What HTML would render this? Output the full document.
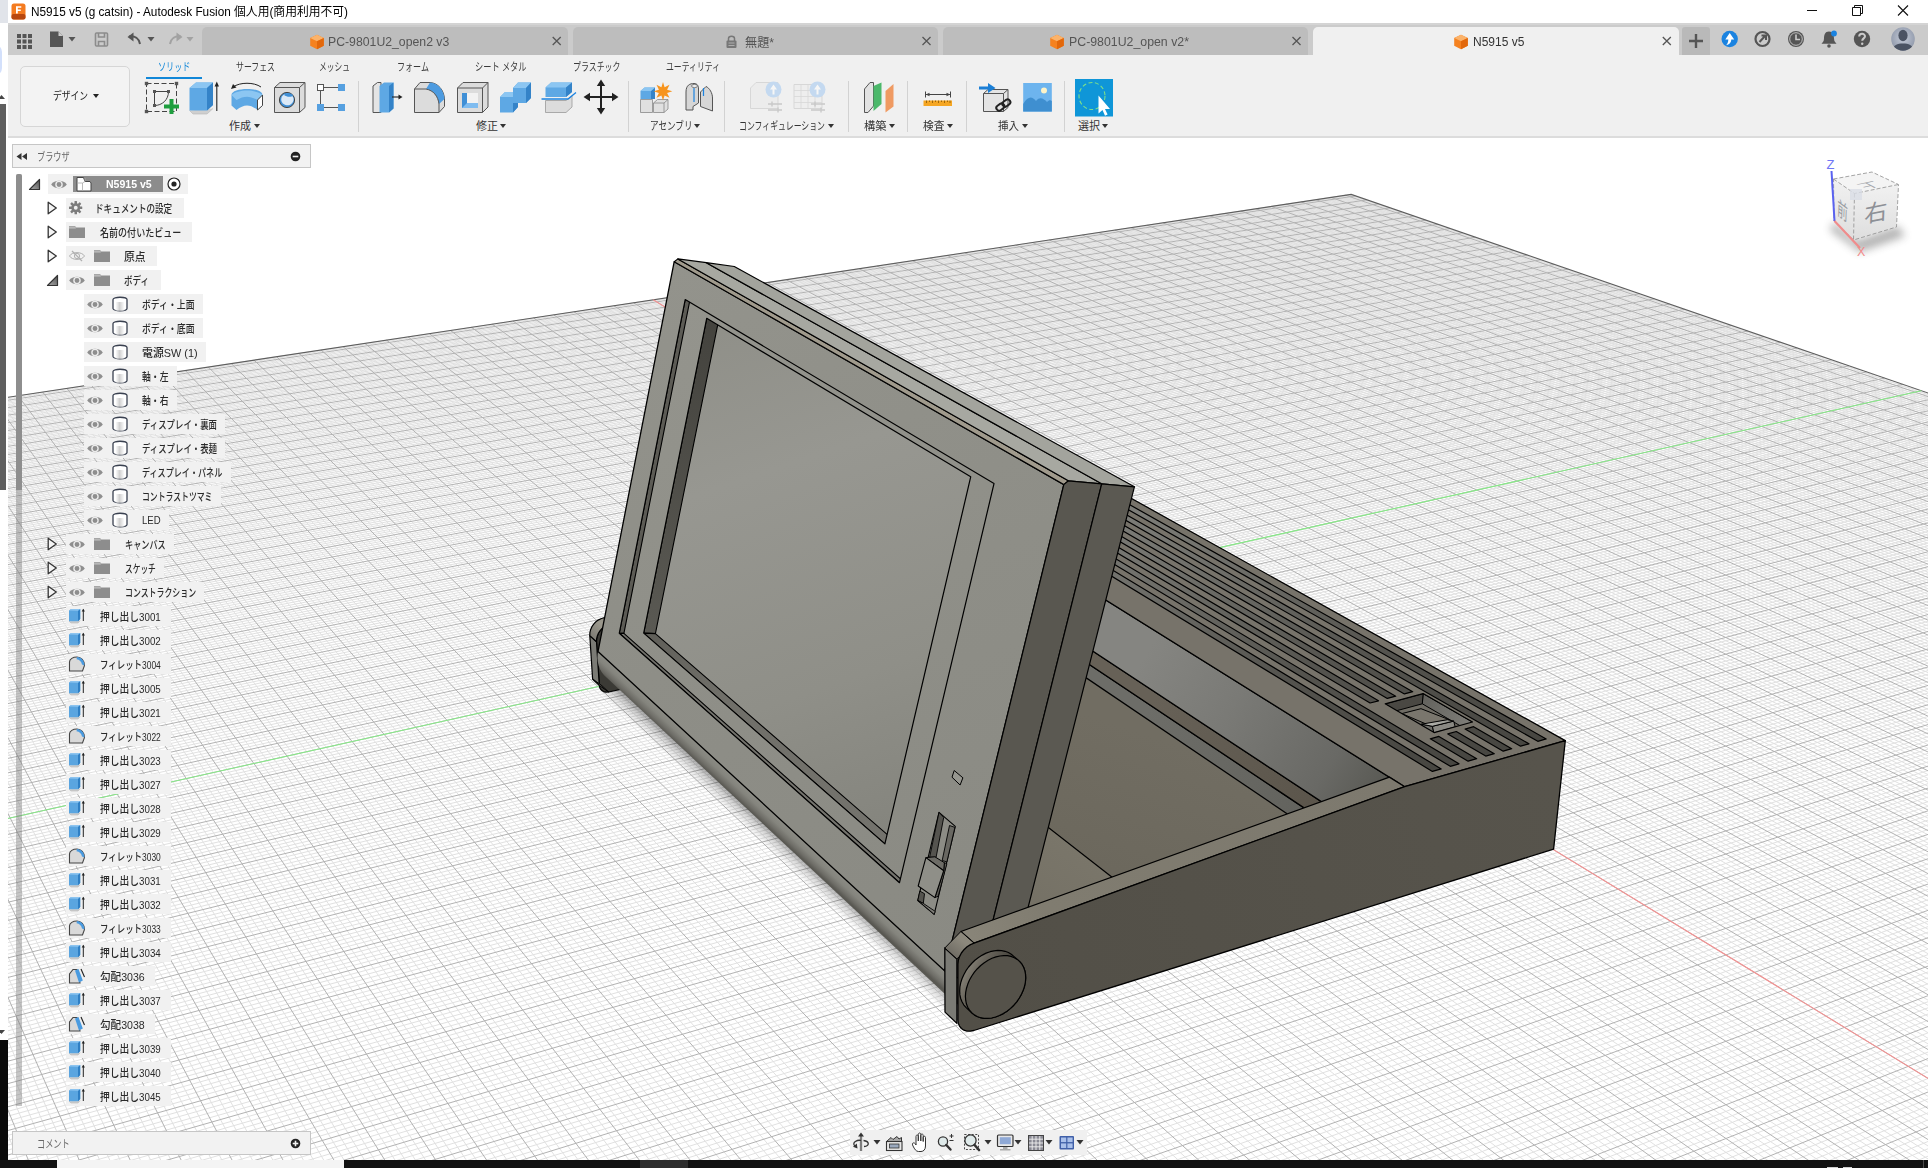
<!DOCTYPE html>
<html lang="ja"><head><meta charset="utf-8"><title>N5915 v5 - Autodesk Fusion</title>
<style>
html,body{margin:0;padding:0;background:#fff}
#app{position:relative;width:1928px;height:1168px;overflow:hidden;background:#fff;font-family:'Liberation Sans','Noto Sans CJK JP',sans-serif;}
.abs{position:absolute}
.t{position:absolute;white-space:nowrap;transform-origin:0 50%;line-height:normal}
.ic{position:absolute;overflow:visible}
.rb{position:absolute;height:20px;background:#f1f1f1}
.tab{position:absolute;top:27px;height:28px;width:365.7px;background:#bdbdbd;border-radius:5px 5px 0 0}
.sep{position:absolute;top:81px;width:1px;height:51px;background:#d2d2d2}
.arr{position:absolute;width:0;height:0;border-left:3.5px solid transparent;border-right:3.5px solid transparent;border-top:4.5px solid #333}
</style></head><body><div id="app">

<svg class="abs" style="left:0;top:0" width="1928" height="1168" viewBox="0 0 1928 1168"><defs><linearGradient id="g1" gradientUnits="userSpaceOnUse" x1="1058.6" y1="705.4" x2="971.1" y2="969.4"><stop offset="0" stop-color="#716d62"/><stop offset="1" stop-color="#676358"/></linearGradient><linearGradient id="g2" gradientUnits="userSpaceOnUse" x1="1001.1" y1="790.6" x2="894" y2="944.9"><stop offset="0" stop-color="#7a766a"/><stop offset="1" stop-color="#6e6a5f"/></linearGradient><linearGradient id="g3" gradientUnits="userSpaceOnUse" x1="1144.8" y1="710.8" x2="1364.1" y2="858.3"><stop offset="0" stop-color="#6d6d68"/><stop offset="0.7" stop-color="#63635e"/><stop offset="1" stop-color="#55554f"/></linearGradient><linearGradient id="g4" gradientUnits="userSpaceOnUse" x1="1153.4" y1="699.6" x2="1373.8" y2="845.8"><stop offset="0" stop-color="#676157"/><stop offset="1" stop-color="#575147"/></linearGradient><linearGradient id="g5" gradientUnits="userSpaceOnUse" x1="1145.4" y1="655.1" x2="1386.4" y2="809.7"><stop offset="0" stop-color="#858581"/><stop offset="0.35" stop-color="#7a7a76"/><stop offset="0.75" stop-color="#696965"/><stop offset="1" stop-color="#55554f"/></linearGradient><linearGradient id="g6" gradientUnits="userSpaceOnUse" x1="1101.9" y1="489.1" x2="1546.2" y2="738.9"><stop offset="0" stop-color="#82827d"/><stop offset="0.3" stop-color="#6e6e69"/><stop offset="0.65" stop-color="#54534e"/><stop offset="1" stop-color="#474641"/></linearGradient><linearGradient id="g7" gradientUnits="userSpaceOnUse" x1="1086.8" y1="492.2" x2="1529" y2="743.8"><stop offset="0" stop-color="#82827d"/><stop offset="0.3" stop-color="#6e6e69"/><stop offset="0.65" stop-color="#54534e"/><stop offset="1" stop-color="#474641"/></linearGradient><linearGradient id="g8" gradientUnits="userSpaceOnUse" x1="1071.7" y1="495.3" x2="1511.7" y2="748.7"><stop offset="0" stop-color="#82827d"/><stop offset="0.3" stop-color="#6e6e69"/><stop offset="0.65" stop-color="#54534e"/><stop offset="1" stop-color="#474641"/></linearGradient><linearGradient id="g9" gradientUnits="userSpaceOnUse" x1="1071.7" y1="495.3" x2="1511.7" y2="748.7"><stop offset="0" stop-color="#82827d"/><stop offset="0.3" stop-color="#6e6e69"/><stop offset="0.65" stop-color="#54534e"/><stop offset="1" stop-color="#474641"/></linearGradient><linearGradient id="g10" gradientUnits="userSpaceOnUse" x1="1056.4" y1="498.5" x2="1494.3" y2="753.7"><stop offset="0" stop-color="#82827d"/><stop offset="0.3" stop-color="#6e6e69"/><stop offset="0.65" stop-color="#54534e"/><stop offset="1" stop-color="#474641"/></linearGradient><linearGradient id="g11" gradientUnits="userSpaceOnUse" x1="1056.4" y1="498.5" x2="1494.3" y2="753.7"><stop offset="0" stop-color="#82827d"/><stop offset="0.3" stop-color="#6e6e69"/><stop offset="0.65" stop-color="#54534e"/><stop offset="1" stop-color="#474641"/></linearGradient><linearGradient id="g12" gradientUnits="userSpaceOnUse" x1="1041" y1="501.6" x2="1476.7" y2="758.7"><stop offset="0" stop-color="#82827d"/><stop offset="0.3" stop-color="#6e6e69"/><stop offset="0.65" stop-color="#54534e"/><stop offset="1" stop-color="#474641"/></linearGradient><linearGradient id="g13" gradientUnits="userSpaceOnUse" x1="1041" y1="501.6" x2="1476.7" y2="758.7"><stop offset="0" stop-color="#82827d"/><stop offset="0.3" stop-color="#6e6e69"/><stop offset="0.65" stop-color="#54534e"/><stop offset="1" stop-color="#474641"/></linearGradient><linearGradient id="g14" gradientUnits="userSpaceOnUse" x1="1025.5" y1="504.8" x2="1459" y2="763.8"><stop offset="0" stop-color="#82827d"/><stop offset="0.3" stop-color="#6e6e69"/><stop offset="0.65" stop-color="#54534e"/><stop offset="1" stop-color="#474641"/></linearGradient><linearGradient id="g15" gradientUnits="userSpaceOnUse" x1="1010" y1="508" x2="1441.2" y2="768.9"><stop offset="0" stop-color="#82827d"/><stop offset="0.3" stop-color="#6e6e69"/><stop offset="0.65" stop-color="#54534e"/><stop offset="1" stop-color="#474641"/></linearGradient><clipPath id="c16"><polygon points="1423.1,693.6 1472.5,722 1434.1,732.6 1385.2,703.8"/></clipPath><linearGradient id="g17" gradientUnits="userSpaceOnUse" x1="1423.1" y1="693.6" x2="1472.5" y2="722"><stop offset="0" stop-color="#62615c"/><stop offset="1" stop-color="#7f7e79"/></linearGradient><linearGradient id="g18" gradientUnits="userSpaceOnUse" x1="1424.1" y1="723.7" x2="1452.6" y2="721.1"><stop offset="0" stop-color="#b6b6b0"/><stop offset="0.5" stop-color="#a6a6a0"/><stop offset="1" stop-color="#8e8e88"/></linearGradient><linearGradient id="g19" gradientUnits="userSpaceOnUse" x1="589.8" y1="635.6" x2="612.5" y2="613"><stop offset="0" stop-color="#7d7b73"/><stop offset="0.5" stop-color="#9c998e"/><stop offset="1" stop-color="#8a877d"/></linearGradient><linearGradient id="g20" gradientUnits="userSpaceOnUse" x1="705.1" y1="750.2" x2="695.5" y2="760.6"><stop offset="0" stop-color="#8c8c85"/><stop offset="0.4" stop-color="#84847d"/><stop offset="0.75" stop-color="#6f6e68"/><stop offset="1" stop-color="#595852"/></linearGradient><linearGradient id="g21" gradientUnits="userSpaceOnUse" x1="611" y1="681.3" x2="599.5" y2="693.8"><stop offset="0" stop-color="rgba(0,0,0,0.36)"/><stop offset="0.45" stop-color="rgba(0,0,0,0.15)"/><stop offset="1" stop-color="rgba(0,0,0,0)"/></linearGradient><linearGradient id="g22" gradientUnits="userSpaceOnUse" x1="674.2" y1="261.7" x2="944.8" y2="970.9"><stop offset="0" stop-color="#93938c"/><stop offset="0.5" stop-color="#8e8e87"/><stop offset="1" stop-color="#8a8a83"/></linearGradient><linearGradient id="g23" gradientUnits="userSpaceOnUse" x1="685.2" y1="299.6" x2="899.5" y2="882.7"><stop offset="0" stop-color="#94948d"/><stop offset="1" stop-color="#8b8b84"/></linearGradient><clipPath id="c24"><polygon points="619.3,633.2 899.5,882.7 994,483.6 685.2,299.6"/></clipPath><linearGradient id="g25" gradientUnits="userSpaceOnUse" x1="702" y1="317.7" x2="879.7" y2="843.9"><stop offset="0" stop-color="#8f8f88"/><stop offset="0.3" stop-color="#979791"/><stop offset="0.7" stop-color="#8f8f88"/><stop offset="1" stop-color="#84847d"/></linearGradient><clipPath id="c26"><polygon points="643.7,633.1 884.9,843.9 970.7,476.8 706.7,318.3"/></clipPath><linearGradient id="g27" gradientUnits="userSpaceOnUse" x1="706.7" y1="318.3" x2="643.7" y2="633.1"><stop offset="0" stop-color="#44433e"/><stop offset="1" stop-color="#5a5953"/></linearGradient><linearGradient id="g28" gradientUnits="userSpaceOnUse" x1="643.7" y1="633.1" x2="884.9" y2="843.9"><stop offset="0" stop-color="#5f5e58"/><stop offset="0.3" stop-color="#706f69"/><stop offset="1" stop-color="#74736d"/></linearGradient><linearGradient id="g29" gradientUnits="userSpaceOnUse" x1="1404.7" y1="786.7" x2="957.9" y2="949"><stop offset="0" stop-color="#7d796e"/><stop offset="0.8" stop-color="#807c70"/><stop offset="1" stop-color="#8a867a"/></linearGradient><linearGradient id="g30" gradientUnits="userSpaceOnUse" x1="957.9" y1="959.8" x2="968.7" y2="945.9"><stop offset="0" stop-color="#6f6c64"/><stop offset="1" stop-color="#8c887c"/></linearGradient><linearGradient id="g31" gradientUnits="userSpaceOnUse" x1="957.9" y1="1000.4" x2="1558.7" y2="801.8"><stop offset="0" stop-color="#524f47"/><stop offset="1" stop-color="#57544c"/></linearGradient><linearGradient id="g32" gradientUnits="userSpaceOnUse" x1="959.7" y1="960.7" x2="997" y2="979.7"><stop offset="0" stop-color="#9a968a"/><stop offset="0.5" stop-color="#6a665d"/><stop offset="1" stop-color="#4a4740"/></linearGradient></defs><path d="M-50.2 406.2L1351.2 194.4M-49.4 407.5L1353.4 195.1M-47.6 410.2L1358 196.7M-46.7 411.5L1360.2 197.5M-45.8 412.9L1362.5 198.3M-44.9 414.2L1364.8 199.1M-43.1 416.9L1369.3 200.6M-42.2 418.3L1371.6 201.4M-41.3 419.7L1373.9 202.2M-40.4 421.1L1376.3 203M-77 429.8L1380.9 204.6M-76.2 431.2L1383.2 205.4M-75.3 432.6L1385.5 206.2M-74.4 434L1387.9 207M-72.7 436.8L1392.5 208.6M-71.8 438.3L1394.9 209.4M-70.9 439.7L1397.2 210.2M-70 441.1L1399.6 211M-68.3 444L1404.3 212.7M-67.4 445.5L1406.7 213.5M-66.5 446.9L1409.1 214.3M-65.6 448.4L1411.5 215.1M-63.8 451.3L1416.3 216.8M-62.9 452.8L1418.7 217.6M-62 454.2L1421.1 218.4M-61.1 455.7L1423.5 219.3M-59.2 458.7L1428.3 220.9M-58.3 460.2L1430.8 221.8M-57.4 461.7L1433.2 222.6M-56.5 463.2L1435.6 223.5M-54.6 466.2L1440.5 225.1M-53.7 467.7L1443 226M-52.7 469.3L1445.5 226.8M-51.8 470.8L1447.9 227.7M-49.9 473.9L1452.9 229.4M-48.9 475.4L1455.4 230.3M-48 477L1457.9 231.1M-47 478.5L1460.4 232M-45.1 481.6L1465.4 233.7M-44.2 483.2L1467.9 234.6M-43.2 484.8L1470.5 235.4M-42.2 486.3L1473 236.3M-40.3 489.5L1478.1 238.1M-80.6 498L1480.6 238.9M-79.7 499.6L1483.2 239.8M-78.8 501.2L1485.7 240.7M-76.9 504.5L1490.9 242.5M-76 506.1L1493.5 243.4M-75 507.8L1496 244.3M-74.1 509.4L1498.6 245.1M-72.2 512.7L1503.8 246.9M-71.3 514.4L1506.5 247.8M-70.3 516.1L1509.1 248.7M-69.3 517.8L1511.7 249.6M-67.4 521.1L1517 251.5M-66.4 522.8L1519.6 252.4M-65.5 524.5L1522.3 253.3M-64.5 526.3L1524.9 254.2M-62.5 529.7L1530.3 256M-61.6 531.4L1532.9 257M-60.6 533.2L1535.6 257.9M-59.6 534.9L1538.3 258.8M-57.6 538.4L1543.7 260.7M-56.6 540.1L1546.4 261.6M-55.6 541.9L1549.1 262.5M-54.6 543.7L1551.8 263.5M-52.6 547.2L1557.3 265.4M-51.5 549L1560.1 266.3M-50.5 550.8L1562.8 267.2M-49.5 552.6L1565.6 268.2M-47.4 556.2L1571.1 270.1M-46.4 558L1573.9 271.1M-45.4 559.9L1576.7 272M-44.3 561.7L1579.5 273M-42.2 565.4L1585.1 274.9M-41.2 567.2L1587.9 275.9M-40.1 569.1L1590.7 276.8M-83.8 579L1593.5 277.8M-81.8 582.8L1599.2 279.8M-80.8 584.7L1602 280.8M-79.8 586.6L1604.9 281.7M-78.8 588.5L1607.8 282.7M-76.8 592.4L1613.5 284.7M-75.7 594.3L1616.4 285.7M-74.7 596.3L1619.3 286.7M-73.7 598.2L1622.2 287.7M-71.6 602.2L1628 289.7M-70.6 604.2L1630.9 290.7M-69.5 606.1L1633.9 291.7M-68.5 608.1L1636.8 292.7M-66.4 612.1L1642.7 294.8M-65.3 614.2L1645.7 295.8M-64.3 616.2L1648.6 296.8M-63.2 618.2L1651.6 297.8M-61.1 622.3L1657.6 299.9M-60 624.4L1660.6 300.9M-58.9 626.4L1663.6 301.9M-57.8 628.5L1666.6 303M-55.7 632.6L1672.7 305.1M-54.6 634.7L1675.7 306.1M-53.5 636.8L1678.7 307.2M-52.4 638.9L1681.8 308.2M-50.2 643.2L1687.9 310.3M-49 645.3L1691 311.4M-47.9 647.5L1694.1 312.5M-46.8 649.6L1697.2 313.5M-44.5 653.9L1703.4 315.7M-43.4 656.1L1706.5 316.7M-42.3 658.3L1709.7 317.8M-41.1 660.5L1712.8 318.9M-87.5 674.4L1719.1 321.1M-86.4 676.6L1722.3 322.1M-85.3 678.9L1725.4 323.2M-84.3 681.2L1728.6 324.3M-82.1 685.7L1735 326.5M-81 688L1738.2 327.6M-79.9 690.3L1741.4 328.7M-78.8 692.6L1744.6 329.8M-76.6 697.3L1751.1 332.1M-75.4 699.6L1754.3 333.2M-74.3 702L1757.6 334.3M-73.2 704.3L1760.9 335.4M-70.9 709.1L1767.4 337.7M-69.8 711.5L1770.7 338.8M-68.6 713.9L1774 340M-67.5 716.3L1777.3 341.1M-65.2 721.1L1784 343.4M-64 723.5L1787.3 344.5M-62.9 726L1790.7 345.7M-61.7 728.4L1794 346.9M-59.3 733.4L1800.8 349.2M-58.1 735.9L1804.1 350.3M-57 738.4L1807.5 351.5M-55.8 740.9L1810.9 352.7M-53.4 745.9L1817.8 355M-52.1 748.4L1821.2 356.2M-50.9 751L1824.6 357.4M-49.7 753.5L1828.1 358.6M-47.2 758.7L1835 361M-46 761.3L1838.5 362.2M-44.8 763.9L1842 363.4M-43.5 766.5L1845.5 364.6M-41 771.7L1852.5 367M-93.1 785.8L1856 368.2M-92 788.5L1859.6 369.4M-90.8 791.2L1863.1 370.7M-88.4 796.7L1870.3 373.1M-87.2 799.4L1873.8 374.3M-86 802.2L1877.4 375.6M-84.9 804.9L1881 376.8M-82.4 810.5L1888.3 379.3M-81.2 813.3L1891.9 380.6M-80 816.1L1895.5 381.8M-78.8 819L1899.2 383.1M-76.3 824.7L1906.5 385.6M-75.1 827.5L1910.2 386.9M-73.9 830.4L1913.9 388.1M-72.6 833.3L1917.6 389.4M-70.1 839.1L1925 392M-68.8 842.1L1928.8 393.3M-67.6 845L1932.5 394.6M-66.3 848L1936.3 395.8M-63.7 853.9L1943.8 398.4M-62.4 856.9L1947.6 399.8M-61.1 859.9L1951.4 401.1M-59.8 863L1955.2 402.4M-57.2 869L1962.9 405M-55.9 872.1L1966.8 406.3M-54.5 875.2L1970.6 407.7M-53.2 878.3L1974.5 409M-50.5 884.5L1982.3 411.7M-49.2 887.6L1986.2 413M-47.8 890.8L1990.1 414.4M-46.4 894L1969.2 421.5M-43.7 900.3L1977.1 424.3M-42.3 903.5L1981 425.7M-40.9 906.8L1985 427.1M-98.6 924L1989 428.4M-96.1 930.7L1971.7 437.3M-94.8 934L1975.7 438.7M-93.5 937.4L1979.8 440.1M-92.2 940.8L1983.8 441.5M-89.6 947.6L1991.9 444.4M-88.2 951L1970.3 452.1M-86.9 954.5L1974.4 453.5M-85.6 957.9L1978.4 455M-82.9 964.9L1986.6 458M-81.5 968.4L1990.7 459.5M-80.2 971.9L1968.8 467.4M-78.8 975.5L1973 468.9M-76.1 982.6L1981.2 471.9M-74.7 986.2L1985.4 473.5M-73.3 989.8L1989.6 475M-71.9 993.5L1993.8 476.5M-69 1000.8L1975.7 486.3M-67.6 1004.5L1979.9 487.9M-66.2 1008.2L1984.1 489.5M-64.8 1011.9L1988.4 491M-61.9 1019.4L1970 501.1M-60.4 1023.2L1974.3 502.7M-58.9 1027L1978.5 504.4M-57.5 1030.8L1982.8 506M-54.5 1038.5L1991.5 509.3M-53 1042.4L1968.4 518M-51.5 1046.3L1972.8 519.7M-50 1050.2L1977.1 521.4M-47 1058.1L1985.9 524.8M-45.4 1062.1L1990.3 526.5M-43.9 1066.1L1994.7 528.2M-42.3 1070.1L1971.2 537.3M-105.5 1095.8L1980.1 540.8M-104.1 1100L1984.6 542.6M-102.7 1104.2L1989 544.3M-101.2 1108.4L1993.5 546.1M-98.4 1116.9L1974.1 557.3M-96.9 1121.2L1978.6 559.2M-95.4 1125.5L1983.2 561M-94 1129.8L1987.7 562.8M-91 1138.5L1996.9 566.5M-89.5 1142.9L1972.5 576.3M-88 1147.4L1977.1 578.2M-86.5 1151.8L1981.8 580.1M-83.5 1160.8L1991 583.8M-81.9 1165.3L1995.7 585.8M-80.4 1169.8L1970.9 595.9M-78.8 1174.4L1975.6 597.9M-75.7 1183.6L1985 601.8M-74.1 1188.3L1989.7 603.8M-72.5 1193L1994.5 605.8M-70.9 1197.7L1969.2 616.3M-67.7 1207.1L1978.8 620.4M-66.1 1211.9L1983.6 622.4M-64.5 1216.7L1988.4 624.4M8.1 1201L1993.2 626.5M11.8 1210.5L1972.3 639.6M13.7 1215.3L1977.2 641.7M15.5 1220.1L1982.1 643.8M87.5 1204.4L1987 645.9M91.6 1213.9L1996.9 650.2M93.7 1218.7L1970.5 661.6M164.9 1203L1975.5 663.8M167.2 1207.8L1980.5 666M171.8 1217.3L1990.5 670.5M242.2 1201.6L1995.6 672.7M244.7 1206.4L1968.7 684.6M247.2 1211.1L1973.8 686.9M319.4 1200.3L1984 691.5M322.1 1205L1989.1 693.8M324.8 1209.8L1994.3 696.1M327.5 1214.5L1999.4 698.4M399.3 1203.6L1977.2 713.2M402.2 1208.4L1982.4 715.6M405.1 1213.2L1987.6 718M408.1 1218L1992.9 720.5M479.5 1207L1970.1 735.8M482.6 1211.8L1975.4 738.3M485.8 1216.6L1980.7 740.8M553.3 1200.9L1986.1 743.3M560 1210.4L1996.8 748.4M563.4 1215.2L1968.2 761.9M566.8 1220L1973.6 764.5M633.6 1204.2L1979 767.1M640.8 1213.8L1989.9 772.3M644.5 1218.6L1995.4 774.9M710.5 1202.9L2000.9 777.6M714.3 1207.6L1971.7 791.8M722 1217.2L1982.8 797.2M787.2 1201.5L1988.4 799.9M791.3 1206.2L1994 802.7M795.3 1211L1999.6 805.5M863.8 1200.1L1975.3 823.1M868.1 1204.9L1981 826M872.3 1209.6L1986.7 828.8M876.6 1214.4L1992.5 831.7M944.7 1203.5L2004 837.5M949.2 1208.2L1973.4 853M953.7 1213L1979.2 856M958.2 1217.8L1985 859M1025.9 1206.9L1996.8 865.1M1030.6 1211.6L2002.7 868.1M1035.3 1216.4L1971.3 884.4M1097.7 1200.7L1977.3 887.5M1107.4 1210.2L1989.2 893.8M1112.4 1215L1995.2 897M1117.3 1219.8L2001.3 900.1M1179 1204.1L1969.2 917.2M1189.3 1213.6L1981.4 923.8M1194.4 1218.4L1987.5 927.1M1255.3 1202.7L1993.6 930.4M1260.7 1207.5L1999.8 933.7M1271.4 1217.1L1973.1 955.1M1331.5 1201.4L1979.4 958.5M1337.1 1206.1L1985.7 962M1342.6 1210.9L1992 965.5M1353.8 1220.5L2004.7 972.5M1413.3 1204.7L1970.9 991.4M1419.1 1209.5L1977.3 995.1M1424.9 1214.3L1983.7 998.7M1489.5 1203.4L1996.7 1006.1M1495.4 1208.1L2003.2 1009.8M1501.5 1212.9L1968.6 1029.7M1507.5 1217.7L1975.1 1033.5M1571.6 1206.7L1988.4 1041.2M1577.9 1211.5L1995 1045.1M1584.1 1216.3L2001.7 1049M1641.3 1200.6L2008.4 1052.9M1654.1 1210.1L1979.6 1078M1660.6 1214.9L1986.4 1082.1M1667.1 1219.7L1993.2 1086.1M1723.6 1204L2000.1 1090.3M1736.9 1213.5L1970.4 1116.6M1743.7 1218.3L1977.4 1120.9M1799.4 1202.6L1984.3 1125.2M1806.3 1207.3L1991.4 1129.5M1820.1 1216.9L2005.5 1138.2M1875.1 1201.2L2012.6 1142.6M1882.1 1206L1975 1166.2M1889.2 1210.7L1982.2 1170.7M1903.5 1220.3L1996.6 1179.9M-50.9 1138.5L-27.4 1202.8M-41.8 1135.9L-18 1200.1M-46.2 1071.8L13.8 1228.5M-48.3 1041.6L23.3 1225.7M-50.3 1012.5L32.8 1222.9M-41.9 1010.4L42.2 1220.1M-46 955.6L61.1 1214.6M-48 929.6L70.4 1211.8M-40 927.7L79.8 1209.1M-42.1 902.8L89.1 1206.3M-45.9 855.4L107.6 1200.9M-47.7 832.9L132.1 1232.1M-40.3 831.3L141.4 1229.3M-42.2 809.6L150.8 1226.5M-45.8 768.3L169.3 1220.9M-47.5 748.6L178.5 1218.1M-40.5 747.1L187.7 1215.4M-42.3 728.1L196.9 1212.6M-45.6 691.7L215.1 1207.1M-47.2 674.3L224.2 1204.4M-40.7 673L233.3 1201.6M-42.4 656.1L260.1 1232.9M-45.5 623.9L278.3 1227.3M-47.1 608.4L287.4 1224.5M-40.9 607.3L296.5 1221.7M-42.5 592.2L305.5 1218.9M-45.4 563.4L323.4 1213.4M-46.9 549.6L332.4 1210.6M-41.1 548.5L341.3 1207.9M-42.5 535.1L350.1 1205.1M-45.4 509.2L388.1 1233.7M-46.7 496.7L397.1 1230.9M-41.2 495.8L406 1228M-42.6 483.6L414.9 1225.2M-45.3 460.2L432.5 1219.7M-46.6 448.9L441.3 1216.9M-41.3 448.1L450.1 1214.1M-42.7 437.1L458.8 1211.4M-45.2 415.8L476.2 1205.9M-40.1 415.1L484.8 1203.2M-41.4 404.8L493.4 1200.4M-36.4 404.1L525 1231.6M-26.4 402.5L542.4 1226M-21.4 401.8L551 1223.2M-16.5 401L559.6 1220.4M-11.5 400.3L568.2 1217.7M-1.6 398.8L585.3 1212.1M3.4 398L593.8 1209.4M8.3 397.3L602.3 1206.7M13.3 396.6L610.7 1203.9M23.1 395.1L653 1232.4M28 394.3L661.5 1229.6M32.9 393.6L670 1226.8M37.8 392.8L678.4 1224M47.5 391.4L695.2 1218.4M52.4 390.6L703.5 1215.7M57.3 389.9L711.9 1212.9M62.1 389.2L720.2 1210.2M71.8 387.7L736.7 1204.7M76.6 387L744.9 1202M81.4 386.3L781.1 1233.2M86.2 385.5L789.4 1230.4M95.8 384.1L805.9 1224.8M100.6 383.4L814.1 1222M105.4 382.6L822.3 1219.2M110.1 381.9L830.4 1216.5M119.6 380.5L846.6 1210.9M124.4 379.8L854.7 1208.2M129.1 379L862.7 1205.5M133.8 378.3L870.7 1202.7M143.3 376.9L917.4 1231.2M148 376.2L925.4 1228.4M152.7 375.5L933.5 1225.6M157.4 374.8L941.4 1222.8M166.7 373.4L957.4 1217.2M171.4 372.7L965.3 1214.5M176 372L973.2 1211.7M180.7 371.2L981 1209M190 369.8L996.7 1203.5M194.6 369.1L1004.5 1200.8M199.2 368.4L1045.4 1232M203.8 367.8L1053.3 1229.2M213 366.4L1068.9 1223.6M217.6 365.7L1076.6 1220.8M222.2 365L1084.4 1218M226.8 364.3L1092.1 1215.2M235.9 362.9L1107.4 1209.7M240.4 362.2L1115.1 1207M245 361.5L1122.7 1204.3M249.5 360.8L1130.3 1201.5M258.6 359.5L1181.2 1229.9M263.1 358.8L1188.8 1227.1M267.6 358.1L1196.4 1224.3M272.1 357.4L1203.9 1221.5M281.1 356.1L1219 1216M285.6 355.4L1226.5 1213.2M290 354.7L1233.9 1210.5M294.5 354.1L1241.4 1207.7M303.4 352.7L1256.1 1202.3M307.8 352L1301.8 1233.5M312.3 351.4L1309.2 1230.7M316.7 350.7L1316.6 1227.9M325.5 349.4L1331.3 1222.3M329.9 348.7L1338.7 1219.5M334.3 348L1346 1216.8M338.7 347.4L1353.2 1214M347.5 346L1367.7 1208.5M351.9 345.4L1374.9 1205.8M356.2 344.7L1382.1 1203.1M360.6 344.1L1389.3 1200.3M369.3 342.7L1444.5 1228.7M373.6 342.1L1451.7 1225.9M378 341.4L1458.8 1223.1M382.3 340.8L1465.9 1220.3M390.9 339.5L1480.1 1214.8M395.2 338.8L1487.1 1212M399.5 338.2L1494.2 1209.3M403.8 337.5L1501.2 1206.5M412.3 336.2L1515.1 1201.1M416.6 335.6L1565.5 1232.3M420.9 334.9L1572.5 1229.5M425.1 334.3L1579.4 1226.7M433.6 333L1593.3 1221.1M437.9 332.4L1600.2 1218.3M442.1 331.7L1607 1215.6M446.3 331.1L1613.9 1212.8M454.7 329.8L1627.5 1207.3M458.9 329.2L1634.3 1204.6M463.1 328.6L1641 1201.9M467.3 327.9L1693.7 1233.1M475.7 326.7L1707.3 1227.4M479.8 326L1714 1224.7M484 325.4L1720.7 1221.9M488.2 324.8L1727.4 1219.1M496.5 323.5L1740.7 1213.6M500.6 322.9L1747.3 1210.8M504.7 322.3L1753.9 1208.1M508.9 321.7L1760.5 1205.3M517.1 320.4L1822.1 1233.9M521.2 319.8L1828.6 1231M525.3 319.2L1835.2 1228.2M529.4 318.6L1841.7 1225.4M537.5 317.3L1854.7 1219.9M541.6 316.7L1861.1 1217.1M545.7 316.1L1867.6 1214.3M549.7 315.5L1874 1211.6M557.8 314.3L1886.8 1206.1M561.9 313.6L1893.1 1203.4M565.9 313L1899.4 1200.7M570 312.4L1956.8 1231.8M578 311.2L1969.5 1226.2M582 310.6L1975.8 1223.4M586 310L1982.1 1220.6M590 309.4L1988.3 1217.9M598 308.2L2000.7 1212.3M602 307.6L2006.9 1209.6M605.9 307L2013.1 1206.9M609.9 306.4L2019.3 1204.1M617.8 305.2L1980 1166.1M621.8 304.6L1986 1163.5M625.7 304L1992 1160.9M629.7 303.4L1998.1 1158.4M637.5 302.2L2010 1153.2M641.4 301.6L2016 1150.7M645.4 301L1972.1 1117.4M649.3 300.4L1978 1115M657.1 299.3L1989.7 1110.1M661 298.7L1995.6 1107.7M664.8 298.1L2001.4 1105.3M668.7 297.5L2007.2 1102.9M676.5 296.3L1970.4 1069.2M680.3 295.7L1976.1 1066.9M684.2 295.2L1981.8 1064.6M688 294.6L1987.5 1062.3M695.7 293.4L1998.8 1057.8M699.6 292.8L2004.5 1055.5M703.4 292.3L2010.1 1053.2M707.2 291.7L1968.8 1023.8M714.8 290.5L1979.9 1019.5M718.6 290L1985.5 1017.3M722.4 289.4L1991 1015.2M726.2 288.8L1996.4 1013M733.8 287.7L2007.4 1008.8M737.6 287.1L2012.8 1006.6M741.3 286.5L1972.8 978.9M745.1 286L1978.1 976.9M752.6 284.8L1988.9 972.8M756.4 284.2L1994.2 970.8M760.1 283.7L1999.5 968.8M763.8 283.1L2004.8 966.8M771.3 282L1971.2 938.6M775 281.4L1976.4 936.6M778.7 280.9L1981.7 934.7M782.5 280.3L1986.9 932.8M789.9 279.2L1997.2 929M793.5 278.6L2002.4 927.1M797.2 278.1L2007.6 925.2M800.9 277.5L1969.7 900.4M808.3 276.4L1979.9 896.7M811.9 275.9L1985 894.9M815.6 275.3L1990 893.1M819.3 274.7L1995.1 891.3M826.6 273.6L2005.1 887.7M830.2 273.1L1968.3 864.1M833.8 272.5L1973.3 862.4M837.5 272L1978.3 860.7M844.7 270.9L1988.1 857.2M848.3 270.4L1993 855.5M851.9 269.8L1997.9 853.8M855.5 269.3L2002.8 852.1M862.7 268.2L1971.9 828.1M866.3 267.6L1976.7 826.5M869.9 267.1L1981.5 824.8M873.5 266.6L1986.3 823.2M880.6 265.5L1995.9 820M884.2 264.9L2000.7 818.3M887.7 264.4L2005.4 816.7M891.3 263.9L1970.5 795.5M898.4 262.8L1979.9 792.4M901.9 262.3L1984.6 790.9M905.4 261.7L1989.3 789.3M908.9 261.2L1993.9 787.8M916 260.1L2003.2 784.7M919.5 259.6L1969.2 764.5M923 259.1L1973.8 763M926.5 258.5L1978.4 761.6M933.5 257.5L1987.5 758.6M937 257L1992.1 757.1M940.5 256.4L1996.6 755.7M943.9 255.9L2001.1 754.2M950.9 254.9L1972.4 733.6M954.3 254.3L1976.9 732.2M957.8 253.8L1981.4 730.7M961.2 253.3L1985.8 729.3M968.1 252.2L1994.7 726.5M971.6 251.7L1999.2 725.1M975 251.2L2003.6 723.7M978.4 250.7L1971.1 705.4M985.3 249.7L1979.9 702.8M988.7 249.1L1984.2 701.4M992.1 248.6L1988.6 700.1M995.5 248.1L1992.9 698.7M1002.3 247.1L2001.6 696.1M1005.7 246.6L1969.9 678.6M1009 246.1L1974.2 677.3M1012.4 245.6L1978.5 676M1019.2 244.5L1987 673.4M1022.5 244L1991.2 672.2M1025.9 243.5L1995.5 670.9M1029.2 243L1999.7 669.6M1035.9 242L1972.9 651.7M1039.3 241.5L1977.1 650.5M1042.6 241L1981.3 649.2M1046 240.5L1985.4 648M1052.6 239.5L1993.7 645.6M1055.9 239L1997.9 644.3M1059.2 238.5L2002 643.1M1062.5 238L1971.7 627.2M1069.1 237L1979.9 624.8M1072.4 236.5L1983.9 623.6M1075.7 236L1988 622.5M1079 235.5L1992.1 621.3M1085.6 234.5L2000.2 619M1088.8 234L1970.5 603.7M1092.1 233.5L1974.5 602.6M1095.4 233L1978.5 601.4M1101.9 232L1986.5 599.2M1105.1 231.5L1990.5 598.1M1108.4 231L1994.5 596.9M1111.6 230.6L1998.4 595.8M1118.1 229.6L1973.3 580.1M1121.3 229.1L1977.2 579M1124.5 228.6L1981.2 577.9M1127.8 228.1L1985.1 576.9M1134.2 227.1L1992.9 574.7M1137.4 226.7L1996.7 573.6M1140.6 226.2L1968.3 559.6M1143.8 225.7L1972.2 558.5M1150.2 224.7L1979.9 556.5M1153.4 224.3L1983.7 555.4M1156.5 223.8L1987.5 554.4M1159.7 223.3L1991.3 553.4M1166 222.3L1998.9 551.3M1169.2 221.9L1971.1 537.8M1172.4 221.4L1974.8 536.8M1175.5 220.9L1978.6 535.8M1181.8 220L1986.1 533.8M1185 219.5L1989.8 532.9M1188.1 219L1993.6 531.9M1191.2 218.5L1997.3 530.9M1197.5 217.6L1973.7 517M1200.6 217.1L1977.4 516M1203.7 216.6L1981.1 515M1206.8 216.2L1984.7 514.1M1213 215.2L1992.1 512.2M1216.1 214.8L1995.7 511.2M1219.2 214.3L1969 498.8M1222.3 213.8L1972.6 497.8M1228.5 212.9L1979.8 496M1231.6 212.4L1983.5 495.1M1234.6 212L1987 494.2M1237.7 211.5L1990.6 493.3M1243.8 210.6L1968 480.3M1246.9 210.1L1971.6 479.4M1249.9 209.7L1975.1 478.6M1253 209.2L1978.7 477.7M1259.1 208.3L1985.7 475.9M1262.1 207.8L1989.3 475M1265.1 207.4L1992.8 474.1M1268.2 206.9L1996.3 473.3M1274.2 206L1974 460.9M1277.2 205.5L1977.5 460M1280.2 205.1L1981 459.2M1283.3 204.6L1984.5 458.3M1289.3 203.7L1991.4 456.6M1292.3 203.3L1994.8 455.8M1295.3 202.8L1969.6 444.6M1298.2 202.4L1973 443.8M1304.2 201.5L1979.8 442.2M1307.2 201L1983.2 441.3M1310.2 200.6L1986.6 440.5M1313.1 200.1L1990 439.7M1319.1 199.2L1968.6 428.1M1322 198.8L1972 427.4M1325 198.3L1975.4 426.6M1327.9 197.9L1978.7 425.8M1333.8 197L1985.4 424.2M1336.7 196.5L1988.7 423.4M1339.7 196.1L1992.1 422.6M1342.6 195.7L1995.4 421.8M1348.5 194.8L1974.3 410.7" stroke="#e1e1e1" stroke-width="1" fill="none"/><path d="M-48.5 408.8L1355.7 195.9M-44 415.6L1367.1 199.8M-77.9 428.4L1378.6 203.8M-73.6 435.4L1390.2 207.8M-69.2 442.6L1402 211.9M-64.7 449.8L1413.9 216M-60.1 457.2L1425.9 220.1M-55.5 464.7L1438.1 224.3M-50.8 472.3L1450.4 228.5M-46.1 480.1L1462.9 232.8M-41.2 487.9L1475.5 237.2M-77.8 502.8L1488.3 241.6M-73.1 511.1L1501.2 246M-68.4 519.5L1514.3 250.5M-63.5 528L1527.6 255.1M-58.6 536.6L1541 259.7M-53.6 545.4L1554.6 264.4M-48.5 554.4L1568.3 269.1M-43.3 563.5L1582.3 273.9M-82.8 580.9L1596.4 278.8M-77.8 590.4L1610.6 283.7M-72.7 600.2L1625.1 288.7M-67.5 610.1L1639.8 293.7M-62.2 620.3L1654.6 298.8M-56.8 630.6L1669.6 304M-51.3 641.1L1684.9 309.3M-45.7 651.8L1700.3 314.6M-88.6 672.1L1715.9 320M-83.2 683.4L1731.8 325.4M-77.7 695L1747.9 331M-72.1 706.7L1764.1 336.6M-66.3 718.7L1780.6 342.3M-60.5 730.9L1797.4 348M-54.6 743.4L1814.3 353.9M-48.5 756.1L1831.6 359.8M-42.3 769.1L1849 365.8M-89.6 793.9L1866.7 371.9M-83.7 807.7L1884.6 378.1M-77.6 821.8L1902.8 384.3M-71.4 836.2L1921.3 390.7M-65 850.9L1940.1 397.1M-58.5 866L1959.1 403.7M-51.9 881.4L1978.4 410.3M-45.1 897.1L1973.1 422.9M-97.4 927.3L1993 429.8M-90.9 944.2L1987.8 443M-84.2 961.4L1982.5 456.5M-77.4 979L1977.1 470.4M-70.5 997.1L1971.5 484.7M-63.3 1015.6L1992.7 492.6M-56 1034.6L1987.2 507.6M-48.5 1054.1L1981.5 523.1M-40.8 1074.1L1975.6 539.1M-99.8 1112.6L1969.6 555.5M-92.5 1134.2L1992.3 564.6M-85 1156.3L1986.4 581.9M-77.3 1179L1980.3 599.8M-69.3 1202.4L1974 618.3M10 1205.7L1998.1 628.6M89.6 1209.1L1991.9 648.1M169.5 1212.5L1985.5 668.2M249.7 1215.9L1978.9 689.2M330.2 1219.4L1972 710.9M476.3 1202.2L1998.1 722.9M556.6 1205.6L1991.4 745.8M637.2 1209L1984.5 769.7M718.1 1212.4L1977.2 794.5M799.3 1215.8L1969.7 820.3M880.9 1219.2L1998.2 834.6M1021.3 1202.1L1990.9 862M1102.5 1205.5L1983.2 890.6M1184.1 1208.9L1975.2 920.5M1266 1212.3L2006 937.1M1348.2 1215.7L1998.3 969M1430.7 1219.1L1990.2 1002.4M1565.5 1202L1981.7 1037.3M1647.7 1205.3L1972.8 1073.9M1730.3 1208.7L2007 1094.4M1813.2 1212.1L1998.4 1133.8M1896.3 1215.5L1989.4 1175.3M-44 1103.2L4.2 1231.3M-44 982.5L51.7 1217.4M-44 878.7L98.3 1203.6M-44 788.6L160 1223.7M-44 709.6L206 1209.8M-44 639.8L269.2 1230.1M-44 577.6L314.5 1216.1M-44 521.9L359 1202.4M-44 471.8L423.7 1222.5M-44 426.3L467.5 1208.6M-31.4 403.3L533.7 1228.8M-6.5 399.5L576.8 1214.9M18.2 395.8L619.1 1201.2M42.7 392.1L686.8 1221.2M66.9 388.4L728.4 1207.4M91 384.8L797.7 1227.6M114.9 381.2L838.5 1213.7M138.6 377.6L878.7 1200M162 374.1L949.4 1220M185.3 370.5L988.9 1206.2M208.4 367.1L1061.1 1226.3M231.3 363.6L1099.8 1212.5M254.1 360.2L1173.6 1232.7M276.6 356.8L1211.5 1218.8M298.9 353.4L1248.8 1205M321.1 350L1324 1225.1M343.1 346.7L1360.5 1211.3M364.9 343.4L1437.3 1231.5M386.6 340.1L1473 1217.5M408.1 336.9L1508.2 1203.8M429.4 333.7L1586.4 1223.9M450.5 330.5L1620.7 1210M471.5 327.3L1700.5 1230.3M492.3 324.2L1734 1216.3M513 321L1767 1202.6M533.5 317.9L1848.2 1222.6M553.8 314.9L1880.4 1208.8M574 311.8L1963.2 1229M594 308.8L1994.5 1215.1M613.9 305.8L1973.9 1168.7M633.6 302.8L2004.1 1155.8M653.2 299.8L1983.9 1112.5M672.6 296.9L2013 1100.5M691.9 294L1993.2 1060M711 291.1L1974.4 1021.6M730 288.2L2001.9 1010.9M748.9 285.4L1983.5 974.8M767.6 282.6L2010.1 964.7M786.2 279.7L1992.1 930.9M804.6 277L1974.8 898.5M822.9 274.2L2000.1 889.5M841.1 271.4L1983.2 859M859.1 268.7L2007.7 850.4M877 266L1991.1 821.6M894.8 263.3L1975.2 794M912.5 260.7L1998.6 786.2M930 258L1982.9 760.1M947.4 255.4L2005.7 752.7M964.7 252.8L1990.3 727.9M981.8 250.2L1975.5 704.1M998.9 247.6L1997.3 697.4M1015.8 245L1982.7 674.7M1032.6 242.5L1968.7 652.9M1049.3 240L1989.6 646.8M1065.8 237.5L1975.8 626M1082.3 235L1996.1 620.1M1098.6 232.5L1982.5 600.3M1114.9 230.1L1969.4 581.2M1131 227.6L1989 575.8M1147 225.2L1976 557.5M1162.9 222.8L1995.1 552.3M1178.7 220.4L1982.4 534.8M1194.4 218.1L1970 517.9M1209.9 215.7L1988.4 513.1M1225.4 213.4L1976.2 496.9M1240.8 211L1994.2 492.3M1256 208.7L1982.2 476.8M1271.2 206.4L1970.6 461.7M1286.3 204.2L1987.9 457.5M1301.2 201.9L1976.4 443M1316.1 199.7L1993.4 438.9M1330.9 197.4L1982.1 425M1345.5 195.2L1971 411.5" stroke="#b2b2b2" stroke-width="1" fill="none"/><path d="M-34.1 403.7L1351.2 194.4L1959.3 403.8" stroke="#5e5e5e" stroke-width="1.1" fill="none"/><line x1="653.2" y1="299.8" x2="1984.3" y2="1112.8" stroke="#f29292" stroke-width="1.1"/><line x1="-31.3" y1="827.3" x2="1921.3" y2="390.7" stroke="#86ea86" stroke-width="1.1"/><polygon points="613.1,679.1 957.3,1001 943.8,1015.7 599.5,693.8" fill="url(#g21)"/><polygon points="957.3,590.7 1364.1,865.8 967.6,985.7 618.3,665.4" fill="url(#g1)" stroke="#000" stroke-width="0" stroke-linejoin="round"/><polygon points="791.6,627.2 1172,923.9 967.6,985.7 618.3,665.4" fill="url(#g2)" stroke="#000" stroke-width="0" stroke-linejoin="round"/><line x1="791.6" y1="627.2" x2="1172" y2="923.9" stroke="#000" stroke-width="1.3"/><polygon points="957.3,590.7 1364.1,865.8 1365.3,848.7 957.3,576.4" fill="url(#g3)" stroke="#000" stroke-width="1.3" stroke-linejoin="round"/><polygon points="957.3,576.4 1365.3,848.7 1384.3,843.1 973.8,572.8" fill="url(#g4)" stroke="#000" stroke-width="1.3" stroke-linejoin="round"/><polygon points="973.8,572.8 1384.3,843.1 1389.4,777.1 974,517.8" fill="url(#g5)" stroke="#000" stroke-width="1.3" stroke-linejoin="round"/><polygon points="1104.2,483.2 1565.3,740.6 1404.7,786.7 964.4,511.8" fill="#77736a" stroke="#000" stroke-width="1.3" stroke-linejoin="round"/><polygon points="1101.9,489.1 1546.2,738.9 1537.8,741.3 1094.5,490.6" fill="url(#g6)" stroke="#000" stroke-width="1.2" stroke-linejoin="round"/><polygon points="1086.8,492.2 1529,743.8 1520.6,746.2 1079.4,493.8" fill="url(#g7)" stroke="#000" stroke-width="1.2" stroke-linejoin="round"/><polygon points="1071.7,495.3 1412.7,691.7 1404.4,693.9 1064.2,496.9" fill="url(#g8)" stroke="#000" stroke-width="1.2" stroke-linejoin="round"/><polygon points="1473.6,726.7 1511.7,748.7 1503.2,751.2 1465.1,729.1" fill="url(#g9)" stroke="#000" stroke-width="1.2" stroke-linejoin="round"/><polygon points="1056.4,498.5 1395.7,696.2 1387.3,698.4 1048.9,500" fill="url(#g10)" stroke="#000" stroke-width="1.2" stroke-linejoin="round"/><polygon points="1456.3,731.5 1494.3,753.7 1485.7,756.1 1447.8,733.9" fill="url(#g11)" stroke="#000" stroke-width="1.2" stroke-linejoin="round"/><polygon points="1041,501.6 1378.5,700.8 1370.1,703 1033.4,503.2" fill="url(#g12)" stroke="#000" stroke-width="1.2" stroke-linejoin="round"/><polygon points="1438.9,736.4 1476.7,758.7 1468.1,761.2 1430.3,738.8" fill="url(#g13)" stroke="#000" stroke-width="1.2" stroke-linejoin="round"/><polygon points="1025.5,504.8 1459,763.8 1450.3,766.3 1017.9,506.4" fill="url(#g14)" stroke="#000" stroke-width="1.2" stroke-linejoin="round"/><polygon points="1010,508 1441.2,768.9 1432.4,771.4 1002.3,509.6" fill="url(#g15)" stroke="#000" stroke-width="1.2" stroke-linejoin="round"/><polygon points="1423.1,693.6 1472.5,722 1434.1,732.6 1385.2,703.8" fill="#6f6c64" stroke="#000" stroke-width="0" stroke-linejoin="round"/><g clip-path="url(#c16)"><polygon points="1423.1,693.6 1472.5,722 1471.6,732.4 1422.3,703.8" fill="url(#g17)" stroke="#000" stroke-width="1" stroke-linejoin="round"/><polygon points="1423.1,693.6 1385.2,703.8 1384.4,714 1422.3,703.8" fill="#4a4843" stroke="#000" stroke-width="1" stroke-linejoin="round"/><polygon points="1401.8,713.6 1421,708.7 1449,719.6 1428.2,724.9" fill="#7a766d" stroke="#000" stroke-width="1" stroke-linejoin="round"/><polygon points="1421.5,724.2 1432.4,726.3 1433.9,733 1424.9,728.3" fill="#6f6e69" stroke="#000" stroke-width="1" stroke-linejoin="round"/><polygon points="1432.4,726.3 1453.7,721.1 1455.2,726.9 1433.9,733" fill="#8a8983" stroke="#000" stroke-width="1" stroke-linejoin="round"/><polygon points="1421.5,724.2 1447.4,719.7 1453.7,721.1 1432.4,726.3" fill="url(#g18)" stroke="#000" stroke-width="1" stroke-linejoin="round"/></g><polygon points="1423.1,693.6 1472.5,722 1434.1,732.6 1385.2,703.8" fill="none" stroke="#000" stroke-width="1.2" stroke-linejoin="round"/><polygon points="652.6,682.2 608.7,692 605.9,692.2 603.4,691.6 601.3,690.1 599.9,688 599.3,685.4 596.5,641.7 596.6,638.8 597.3,635.9 598.5,633 600.3,630.4 602.4,628.1 604.9,626.2 607.7,624.7 610.6,623.8 649.1,615.7" fill="#3b3a35" stroke="#000" stroke-width="1.2" stroke-linejoin="round"/><polygon points="592.6,679 599.3,685.4 596.5,641.7 589.8,635.6" fill="#7b7b75" stroke="#000" stroke-width="1.2" stroke-linejoin="round"/><polygon points="592.6,679 599.3,685.4 608.7,692 601.9,685.7" fill="#5f5e58" stroke="#000" stroke-width="1" stroke-linejoin="round"/><polygon points="589.8,635.6 589.9,632.6 590.6,629.7 591.8,626.9 593.5,624.3 595.6,622 598.1,620.1 600.9,618.7 603.7,617.8 642.1,609.7 649.1,615.7 610.6,623.8 607.7,624.7 604.9,626.2 602.4,628.1 600.3,630.4 598.5,633 597.3,635.9 596.6,638.8 596.5,641.7" fill="url(#g19)" stroke="#000" stroke-width="1.2" stroke-linejoin="round"/><polygon points="657.6,645 1015.2,957.5 1015.1,962.1 1014.4,966.9 1013.1,971.6 1011.2,976.4 1008.8,981 1006,985.4 1002.7,989.6 999.1,993.4 995.1,996.9 990.8,999.9 986.4,1002.4 981.9,1004.4 977.3,1005.8 972.7,1006.6 968.3,1006.8 964,1006.4 960,1005.4 956.3,1003.7 953,1001.6 606.5,677.5 603.9,675.1 601.7,672.2 599.9,669.1 598.6,665.6 597.8,662 597.4,658.2 597.6,654.3 598.3,650.3 599.5,646.4 601.1,642.6" fill="url(#g20)" stroke="#000" stroke-width="0" stroke-linejoin="round"/><polygon points="598,651.6 944.8,970.9 1063.8,484.6 674.2,261.7" fill="url(#g22)" stroke="#000" stroke-width="1.3" stroke-linejoin="round"/><polygon points="619.3,633.2 899.5,882.7 994,483.6 685.2,299.6" fill="url(#g23)" stroke="#000" stroke-width="0" stroke-linejoin="round"/><g clip-path="url(#c24)"><polygon points="619.3,633.2 685.2,299.6 689.9,300.2 623.9,633.4" fill="#5c5b55" stroke="#000" stroke-width="1.1" stroke-linejoin="round"/><polygon points="619.3,633.2 899.5,882.7 904.8,882.7 623.9,633.4" fill="#74736d" stroke="#000" stroke-width="1.1" stroke-linejoin="round"/></g><polygon points="619.3,633.2 899.5,882.7 994,483.6 685.2,299.6" fill="none" stroke="#000" stroke-width="1.2" stroke-linejoin="round"/><polygon points="643.7,633.1 884.9,843.9 970.7,476.8 706.7,318.3" fill="url(#g25)" stroke="#000" stroke-width="0" stroke-linejoin="round"/><g clip-path="url(#c26)"><polygon points="643.7,633.1 706.7,318.3 718.7,319.8 655.4,633.6" fill="url(#g27)" stroke="#000" stroke-width="1.1" stroke-linejoin="round"/><polygon points="643.7,633.1 884.9,843.9 898,843.8 655.4,633.6" fill="url(#g28)" stroke="#000" stroke-width="1.1" stroke-linejoin="round"/></g><polygon points="643.7,633.1 884.9,843.9 970.7,476.8 706.7,318.3" fill="none" stroke="#000" stroke-width="1.2" stroke-linejoin="round"/><polygon points="954.2,770.5 962.9,777.8 960.1,785 952,777.2" fill="#96968f" stroke="#000" stroke-width="1" stroke-linejoin="round"/><polygon points="939,812.4 955.3,826.3 934.2,914.4 917.8,900.5" fill="#8c8c85" stroke="#000" stroke-width="1.1" stroke-linejoin="round"/><polygon points="939,812.4 943.7,817.5 936.1,857.3 929.6,857.3" fill="#55544f" stroke="#000" stroke-width="0.9" stroke-linejoin="round"/><polygon points="949.5,825.5 954.9,827.4 946.9,861.9 942.2,860.5" fill="#696862" stroke="#000" stroke-width="0.9" stroke-linejoin="round"/><polygon points="917.8,900.5 919.8,891.1 924.5,893.7 923.3,903.4" fill="#55544f" stroke="#000" stroke-width="0.9" stroke-linejoin="round"/><polygon points="917.8,900.5 923.3,903.4 935.2,911.4 934.2,914.4" fill="#7d7c76" stroke="#000" stroke-width="0.9" stroke-linejoin="round"/><polygon points="943.7,870.7 944.4,862.7 946.9,863.7 938.2,896.2 934.9,897.6" fill="#5f5e58" stroke="#000" stroke-width="0.9" stroke-linejoin="round"/><polygon points="925.9,857.6 934.9,856.8 944.4,862.7 943.7,870.7" fill="#6d6c66" stroke="#000" stroke-width="1" stroke-linejoin="round"/><polygon points="925.9,857.6 943.7,870.7 934.9,897.6 918.2,886" fill="#8f8f88" stroke="#000" stroke-width="1.1" stroke-linejoin="round"/><polygon points="674.2,261.7 1063.8,484.6 1068.4,480.8 677.9,258.9" fill="#a09a8c" stroke="#000" stroke-width="1.1" stroke-linejoin="round"/><polygon points="677.9,258.9 1068.4,480.8 1101.7,483.8 706.3,262.7" fill="#a7a8a1" stroke="#000" stroke-width="1.2" stroke-linejoin="round"/><polygon points="706.3,262.7 1101.7,483.8 1134.4,486.8 734.3,266.5" fill="#a3a49d" stroke="#000" stroke-width="1.2" stroke-linejoin="round"/><polygon points="944.8,970.9 1063.8,484.6 1068.4,480.8 1101.7,483.8 976.2,987.8" fill="#595750" stroke="#000" stroke-width="1.2" stroke-linejoin="round"/><polygon points="976.2,987.8 1101.7,483.8 1134.4,486.8 1008.1,986.5" fill="#5b5952" stroke="#000" stroke-width="1.2" stroke-linejoin="round"/><polygon points="1389.4,777.1 1404.7,786.7 974.1,943.2 960.9,931.5" fill="url(#g29)" stroke="#000" stroke-width="1.3" stroke-linejoin="round"/><polygon points="945,1012.1 956.9,1023.4 956.9,958.9 944.8,948" fill="#7b7b75" stroke="#000" stroke-width="1.3" stroke-linejoin="round"/><polygon points="944.8,948 956.9,958.9 974.1,943.2 960.9,931.5" fill="url(#g30)" stroke="#000" stroke-width="1" stroke-linejoin="round"/><polygon points="1553.6,849.1 1565.3,740.6 1404.7,786.7 974.1,943.2 970.5,944.6 967.1,946.8 964,949.7 961.4,953 959.5,956.6 958.3,960.4 957.9,964.1 957.9,1019.8 958.3,1023.2 959.5,1026.1 961.4,1028.5 963.9,1030.2 966.9,1031.1 970.3,1031.2 973.8,1030.5" fill="url(#g31)" stroke="#000" stroke-width="1.3" stroke-linejoin="round"/><polygon points="968.6,967 971.6,963.5 974.9,960.3 978.5,957.5 982.3,955.1 986.1,953.1 990.1,951.7 994,950.8 997.9,950.4 1001.6,950.6 1005.1,951.3 1008.4,952.5 1011.3,954.2 1013.8,956.4 1019.7,961.6 1021.9,964.2 1023.6,967.2 1024.8,970.6 1025.5,974.2 1025.7,978 1025.4,982 1024.6,986 1023.3,990.1 1021.5,994.1 1019.3,998 1016.7,1001.8 1013.8,1005.2 1010.5,1008.4 1007,1011.2 1003.3,1013.6 999.4,1015.5 995.5,1017 991.6,1018 987.8,1018.4 984,1018.3 980.5,1017.7 977.2,1016.5 974.3,1014.9 971.7,1012.7 965.9,1007.4 963.7,1004.8 962,1001.8 960.7,998.5 959.9,994.9 959.7,991 959.9,987 960.7,982.9 962,978.8 963.8,974.7 966,970.7" fill="url(#g32)" stroke="#000" stroke-width="1.2" stroke-linejoin="round"/><polygon points="1025.7,978 1025.5,974.2 1024.8,970.6 1023.6,967.2 1021.9,964.2 1019.7,961.6 1017.2,959.4 1014.3,957.7 1011,956.4 1007.5,955.7 1003.8,955.6 999.9,956 996,956.9 992,958.3 988.1,960.3 984.3,962.7 980.7,965.5 977.4,968.7 974.4,972.2 971.8,976 969.5,980 967.8,984.1 966.5,988.2 965.7,992.3 965.4,996.3 965.7,1000.2 966.4,1003.8 967.7,1007.2 969.5,1010.1 971.7,1012.7 974.3,1014.9 977.2,1016.5 980.5,1017.7 984,1018.3 987.8,1018.4 991.6,1018 995.5,1017 999.4,1015.5 1003.3,1013.6 1007,1011.2 1010.5,1008.4 1013.8,1005.2 1016.7,1001.8 1019.3,998 1021.5,994.1 1023.3,990.1 1024.6,986 1025.4,982" fill="#55524a" stroke="#000" stroke-width="1.2" stroke-linejoin="round"/></svg>
<svg width="0" height="0" style="position:absolute"><defs>
<symbol id="i-eye" viewBox="0 0 16 11"><path d="M0.2 5.5C3 0.6 13 0.6 15.8 5.5C13 10.4 3 10.4 0.2 5.5Z" fill="#8e8e8e"/><circle cx="8" cy="5.5" r="3.1" fill="none" stroke="#ececec" stroke-width="1.4"/></symbol>
<symbol id="i-eyeoff" viewBox="0 0 16 12"><path d="M0.5 6C3 1.5 13 1.5 15.5 6C13 10.5 3 10.5 0.5 6Z" fill="none" stroke="#b0b0b0" stroke-width="1"/><circle cx="8" cy="6" r="2.6" fill="none" stroke="#b0b0b0"/><path d="M3 1L13 11" stroke="#b0b0b0" stroke-width="1.2"/></symbol>
<symbol id="i-folder" viewBox="0 0 16 13"><path d="M0 1.2H6.2L7.2 2.6H16V13H0Z" fill="#8d8d8d"/><path d="M0 2.9H6.8" stroke="#f0f0f0" stroke-width="0.7"/></symbol>
<symbol id="i-gear" viewBox="0 0 14 14"><g fill="#7d7d7d"><circle cx="7" cy="7" r="4.6"/><g id="gt"><rect x="5.7" y="0" width="2.6" height="14" rx="0.6"/></g><rect x="5.7" y="0" width="2.6" height="14" rx="0.6" transform="rotate(45 7 7)"/><rect x="5.7" y="0" width="2.6" height="14" rx="0.6" transform="rotate(90 7 7)"/><rect x="5.7" y="0" width="2.6" height="14" rx="0.6" transform="rotate(135 7 7)"/></g><circle cx="7" cy="7" r="2" fill="#f0f0f0"/></symbol>
<symbol id="i-body" viewBox="0 0 16 16"><defs><linearGradient id="bg1" x1="0" x2="1" y1="0" y2="0"><stop offset="0" stop-color="#fff"/><stop offset="0.45" stop-color="#d0d0d0"/><stop offset="1" stop-color="#fff"/></linearGradient></defs><path d="M1 3.5C1 0.5 15 0.5 15 3.5V12.5C15 15.5 1 15.5 1 12.5Z" fill="#fff" stroke="#3a4150" stroke-width="1.3"/><path d="M3.5 6H12.5V14.2C10 15 6 15 3.5 14.2Z" fill="url(#bg1)"/></symbol>
<symbol id="i-comp" viewBox="0 0 16 16"><path d="M1 1.5H7.5L9 5.5H14L15 7V15H1Z" fill="#fff" stroke="#444" stroke-width="1"/><path d="M1 7H6.5V15M6.5 7L9 5.5M9 5.5V2" fill="none" stroke="#aaa" stroke-width="0.8"/></symbol>
<symbol id="i-ext" viewBox="0 0 18 16"><path d="M1 13.2L3 15H10L12.2 12.5" fill="#cfcfcf" stroke="#aaa" stroke-width="0.5"/><path d="M1 2.5L3.2 1H12.2V11L10 13.2H1Z" fill="#5aa5e0"/><path d="M10 2.8L12.2 1V11L10 13.2Z" fill="#2f7fc4"/><path d="M1 2.5L3.2 1H12.2L10 2.8Z" fill="#8cc4f0"/><path d="M15.3 1.5V13" stroke="#222" stroke-width="1"/><path d="M13.7 3.6L15.3 0.8L16.9 3.6Z" fill="#222"/></symbol>
<symbol id="i-fil" viewBox="0 0 18 16"><path d="M1.5 15V6C1.5 3 5 1 9 1C13 1 16.5 4.5 16.5 9.5L14.5 15Z" fill="#d9d9d9" stroke="#444" stroke-width="1.1"/><path d="M9 1C13 1 16.5 4.5 16.5 9.5L14 8.5C13.5 5.5 11.5 3.6 8.5 3.2Z" fill="#4a9be0"/></symbol>
<symbol id="i-dra" viewBox="0 0 18 16"><path d="M1.5 15V6L5 1.5H9L12 15Z" fill="#d9d9d9" stroke="#444" stroke-width="1.1"/><path d="M7 2.5L10.5 1L14.8 12.5L11 14.5Z" fill="#4a9be0"/><path d="M13 1L16.5 9" stroke="#222" stroke-width="1.1"/></symbol>
<symbol id="i-cube" viewBox="0 0 16 16"><path d="M8 0.8L14.8 4V11.8L8 15.2L1.2 11.8V4Z" fill="#f58220"/><path d="M8 0.8L14.8 4L8 7.3L1.2 4Z" fill="#fbb36b"/><path d="M8 7.3L14.8 4V11.8L8 15.2Z" fill="#e2680c"/></symbol>
</defs></svg>
<!-- left strip (another window behind) -->
<div class="abs" style="left:0;top:0;width:8px;height:1168px;background:#fff"></div>
<div class="abs" style="left:0;top:0;width:8px;height:23px;background:#e1e4ea"></div>
<div class="abs" style="left:-14px;top:44px;width:16px;height:32px;border-radius:16px;background:#d3e0fb"></div>
<div class="abs" style="left:0;top:104px;width:6px;height:386px;background:#5f5f5f"></div>
<div class="abs" style="left:0;top:1040px;width:8px;height:128px;background:#0a0a0a"></div>
<svg class="ic" style="left:0;top:93px" width="8" height="8" viewBox="0 0 8 8"><path d="M-2 6L1.5 2L5 6Z" fill="#444"/></svg>
<svg class="ic" style="left:0;top:1028px" width="8" height="8" viewBox="0 0 8 8"><path d="M-2 2L1.5 6L5 2Z" fill="#444"/></svg>
<!-- title bar -->
<div class="abs" style="left:8px;top:0;width:1920px;height:23px;background:#fff"></div>
<svg class="ic" style="left:11px;top:3px" width="15" height="17" viewBox="0 0 15 17"><rect x="0.5" y="0.5" width="14" height="16" rx="2.5" fill="#f47b20"/><rect x="0.5" y="11" width="14" height="5.5" rx="2" fill="#b8470e"/><path d="M5 3.2H10.3V4.8H6.8V6.4H9.8V8H6.8V10.6H5Z" fill="#fff"/></svg>
<svg class="ic" style="left:1800px;top:0" width="128" height="23" viewBox="0 0 128 23"><path d="M7 10.5H17" stroke="#111" stroke-width="1"/><path d="M52.5 7.5H60.5V15.5H52.5Z M54.5 7.5V5.5H62.5V13.5H60.5" fill="none" stroke="#111" stroke-width="1"/><path d="M98 5.5L108 15.5M108 5.5L98 15.5" stroke="#111" stroke-width="1.1"/></svg>
<!-- tab bar -->
<div class="abs" style="left:8px;top:23px;width:1920px;height:32px;background:#cbcbcb"></div>
<div class="abs" style="left:8px;top:23px;width:1920px;height:2px;background:#d4d4d4"></div>
<div class="tab" style="left:202.2px"></div><div class="tab" style="left:572.5px"></div><div class="tab" style="left:942.8px"></div>
<div class="tab" style="left:1313.1px;background:#f0f0f0"></div>
<div class="abs" style="left:1682px;top:27px;width:28px;height:28px;background:#b9b9b9;border-radius:3px 3px 0 0"></div>
<svg class="ic" style="left:8px;top:23px" width="200" height="32" viewBox="0 0 200 32"><g fill="#555"><rect x="9" y="11" width="4" height="4"/><rect x="14.5" y="11" width="4" height="4"/><rect x="20" y="11" width="4" height="4"/><rect x="9" y="16.5" width="4" height="4"/><rect x="14.5" y="16.5" width="4" height="4"/><rect x="20" y="16.5" width="4" height="4"/><rect x="9" y="22" width="4" height="4"/><rect x="14.5" y="22" width="4" height="4"/><rect x="20" y="22" width="4" height="4"/>
<path d="M42 8.5H50.5L55 13V24H42Z"/><path d="M60.5 14L67.5 14L64 18.5Z"/></g><path d="M50.5 8.5V13H55" fill="#cbcbcb"/>
<g fill="none" stroke="#8c8c8c" stroke-width="1.6"><rect x="87.5" y="10" width="12" height="13" rx="1"/><path d="M90.5 10V14H96.5V10M90.5 23V18.5H96.5V23"/></g>
<path d="M121 13.5C127 12.5 131 15.5 132 21" fill="none" stroke="#555" stroke-width="2"/><path d="M119.5 14L125.5 9.5V18.5Z" fill="#555"/><path d="M139.5 14L146.5 14L143 18.5Z" fill="#555"/>
<path d="M173 13.5C167 12.5 163 15.5 162 21" fill="none" stroke="#a2a2a2" stroke-width="2"/><path d="M174.5 14L168.5 9.5V18.5Z" fill="#a2a2a2"/><path d="M178.5 14L185.5 14L182 18.5Z" fill="#a2a2a2"/></svg>
<svg class="ic" style="left:308.5px;top:33.5px" width="16" height="16"><use href="#i-cube"/></svg>
<svg class="ic" style="left:1049px;top:33.5px" width="16" height="16"><use href="#i-cube"/></svg>
<svg class="ic" style="left:1453px;top:33.5px" width="16" height="16"><use href="#i-cube"/></svg>
<svg class="ic" style="left:725px;top:34px" width="13" height="15" viewBox="0 0 13 15"><path d="M3.5 7V4.5C3.5 1.5 9.5 1.5 9.5 4.5V7" fill="none" stroke="#777" stroke-width="1.5"/><rect x="1.5" y="6.5" width="10" height="7.5" rx="1" fill="#777"/><path d="M3.5 9H9.5M3.5 11.5H9.5" stroke="#bdbdbd" stroke-width="0.8"/></svg>
<svg class="ic" style="left:0;top:23px" width="1928" height="32" viewBox="0 0 1928 32"><g stroke="#555" stroke-width="1.3"><path d="M552.7 14L560.7 22M560.7 14L552.7 22"/><path d="M922.5 14L930.5 22M930.5 14L922.5 22"/><path d="M1292.5 14L1300.5 22M1300.5 14L1292.5 22"/><path d="M1662.8 14L1670.8 22M1670.8 14L1662.8 22"/></g>
<path d="M1689 18H1703M1696 11V25" stroke="#555" stroke-width="2.4"/>
<circle cx="1729.7" cy="16" r="8.2" fill="#1b83e0"/><path d="M1729.7 10L1725.3 16.5H1728.3C1728.3 19 1727.5 21 1726 22.3C1729.5 21.8 1731.3 19.5 1731.3 16.5H1734.2Z" fill="#fff"/>
<circle cx="1762.5" cy="16" r="7" fill="none" stroke="#555" stroke-width="2.2"/><path d="M1759.5 19L1765.5 12.5M1761.5 12.5H1766V17" fill="none" stroke="#555" stroke-width="2"/><path d="M1754 19L1757.5 22.5L1754.5 24.5Z" fill="#cbcbcb"/>
<circle cx="1796" cy="16" r="8" fill="#555"/><circle cx="1796" cy="16" r="6.3" fill="none" stroke="#cbcbcb" stroke-width="0.9"/><path d="M1796 11.5V16.5H1800" fill="none" stroke="#cbcbcb" stroke-width="1.6"/>
<path d="M1829 8.5C1825 8.5 1824 12 1824 15.5C1824 18.5 1822.5 19.5 1821.5 20.8H1836.5C1835.5 19.5 1834 18.5 1834 15.5C1834 12 1833 8.5 1829 8.5Z" fill="#555"/><circle cx="1829" cy="23" r="1.8" fill="#555"/><circle cx="1834" cy="10.5" r="2.9" fill="#1b83e0"/>
<circle cx="1862" cy="16" r="8.2" fill="#555"/><path d="M1859.2 13.5C1859.2 10 1865 10 1865 13.3C1865 15.3 1862.2 15.5 1862.2 17.8" fill="none" stroke="#cbcbcb" stroke-width="2"/><circle cx="1862.2" cy="20.8" r="1.2" fill="#cbcbcb"/>
<defs><clipPath id="avc"><circle cx="1903" cy="16" r="11.8"/></clipPath><radialGradient id="avg" cx="0.5" cy="0.45" r="0.6"><stop offset="0" stop-color="#c5cbd8"/><stop offset="1" stop-color="#8d96a8"/></radialGradient></defs>
<circle cx="1903" cy="16" r="11.8" fill="url(#avg)"/><g clip-path="url(#avc)" fill="#4b5363"><ellipse cx="1903" cy="12.5" rx="4.6" ry="5.8"/><path d="M1892 30C1892 22 1897 20.5 1903 20.5C1909 20.5 1914 22 1914 30Z"/></g></svg>
<!-- toolbar -->
<div class="abs" style="left:8px;top:55px;width:1920px;height:81px;background:#f0f0f0"></div>
<div class="abs" style="left:8px;top:136px;width:1920px;height:1.5px;background:#dcdcdc"></div>
<div class="abs" style="left:20px;top:66px;width:108px;height:59px;border:1px solid #d6d6d6;border-radius:5px;background:#f3f3f3"></div>
<div class="arr" style="left:92.5px;top:94px;border-top-color:#222"></div>
<div class="abs" style="left:146px;top:76.5px;width:56px;height:2.6px;background:#1187d8"></div>
<div class="sep" style="left:358px"></div><div class="sep" style="left:628px"></div><div class="sep" style="left:724px"></div><div class="sep" style="left:848px"></div><div class="sep" style="left:907px"></div><div class="sep" style="left:966px"></div><div class="sep" style="left:1064px"></div>
<div class="arr" style="left:253.5px;top:124px"></div><div class="arr" style="left:500px;top:124px"></div><div class="arr" style="left:693.5px;top:124px"></div><div class="arr" style="left:827.5px;top:124px"></div><div class="arr" style="left:889px;top:124px"></div><div class="arr" style="left:946.5px;top:124px"></div><div class="arr" style="left:1021.5px;top:124px"></div><div class="arr" style="left:1102px;top:124px"></div>
<svg class="ic" style="left:140px;top:78px" width="990" height="42" viewBox="140 78 990 42">
<defs><linearGradient id="bl" x1="0" y1="0" x2="0" y2="1"><stop offset="0" stop-color="#7dbcf0"/><stop offset="1" stop-color="#4d9be0"/></linearGradient></defs>
<!-- sketch -->
<g fill="none" stroke="#444" stroke-width="1"><path d="M146.5 83.5H176.5V111.5H146.5Z" stroke-dasharray="5 2.5"/><path d="M154.5 91.5H168.5C168.5 100 162 105.5 154.5 105.5Z"/></g><g fill="#555"><rect x="144.8" y="81.8" width="3.4" height="3.4"/><rect x="174.8" y="81.8" width="3.4" height="3.4"/><rect x="144.8" y="109.8" width="3.4" height="3.4"/><rect x="153" y="90" width="3" height="3"/><rect x="167" y="90" width="3" height="3"/><rect x="153" y="104" width="3" height="3"/></g><path d="M164 104.5H169.5V99H173.5V104.5H179V108.5H173.5V114H169.5V108.5H164Z" fill="#1e9e3e"/>
<!-- extrude -->
<path d="M189.5 110.5L193 114H207L213 108.5" fill="#cfcfcf" stroke="#b5b5b5" stroke-width="0.6"/><path d="M189.5 88L196 82.5H213V105L207 110.5H189.5Z" fill="#5ea8e4"/><path d="M189.5 88L196 82.5H213L207 88Z" fill="#8cc6f2"/><path d="M207 88L213 82.5V105L207 110.5Z" fill="#3483c8"/><path d="M216.8 84V111" stroke="#222" stroke-width="1.1"/><path d="M214.6 86.5L216.8 81.5L219 86.5Z" fill="#222"/>
<!-- revolve -->
<path d="M231.5 95C231.5 87 262.5 87 262.5 95V105.5L257.5 110C250 104 244 104 236.5 110L231.5 105.5Z" fill="#5ea8e4"/><path d="M231.5 95C238 89 256 89 262.5 95L257.5 100C250 95.5 244 95.5 236.5 100Z" fill="#8cc6f2"/><path d="M257.5 100L262.5 95V105.5L257.5 110Z" fill="#fff" stroke="#444" stroke-width="1"/><path d="M233 87C240 82 254 82 261 87" fill="none" stroke="#222" stroke-width="1"/><path d="M231 89L233 84L236.5 87.5Z" fill="#222"/>
<!-- hole -->
<path d="M274.5 87.5L280 82.5H305V107.5L299.5 112.5H274.5Z" fill="#dcdcdc" stroke="#555" stroke-width="1"/><path d="M274.5 87.5H299.5V112.5M299.5 87.5L305 82.5" fill="none" stroke="#555" stroke-width="1"/><circle cx="287" cy="100" r="7.6" fill="#3f8fd6" stroke="#444" stroke-width="1"/><path d="M282 96.5C285 92 292 93.5 293.5 98C294.5 102.5 290 106.5 285.5 105C281 103.5 280.5 99 282 96.5Z" fill="#dbe9f7"/><path d="M284 95C287 97.5 292 97 293 95.5C291 92.5 286 92.5 284 95Z" fill="#3f8fd6"/>
<!-- pattern -->
<path d="M320.5 87.5H341.5M320.5 87.5V107.5H341.5" fill="none" stroke="#555" stroke-width="1"/><rect x="317.5" y="84.5" width="6" height="6" fill="#fff" stroke="#555"/><rect x="338" y="84" width="7" height="7" fill="#56a0e0"/><rect x="317" y="104" width="7" height="7" fill="#56a0e0"/><rect x="338" y="104" width="7" height="7" fill="#56a0e0"/>
<!-- presspull -->
<path d="M373 86L377.5 82.5H381V112.5H373Z" fill="#e4e4e4" stroke="#555" stroke-width="1"/><path d="M379.5 86L384 82.5H393.5V108.5L389 112.5H379.5Z" fill="#5ea8e4"/><path d="M389 86L393.5 82.5V108.5L389 112.5Z" fill="#3483c8"/><path d="M392 97H400" stroke="#222" stroke-width="1.1"/><path d="M398.5 94.5L402.5 97L398.5 99.5Z" fill="#222"/>
<!-- fillet -->
<path d="M414.5 112.5V89L420 82.5H430C438 83 444 90 444.5 99V106.5L439 112.5Z" fill="#dcdcdc" stroke="#555" stroke-width="1"/><path d="M430 82.5C438 83 444 90 444.5 99L439 104C438 96 433.5 90.5 426 89Z" fill="#4d9be0"/><path d="M414.5 89H426C433.5 90.5 438 96 439 104V112.5" fill="none" stroke="#555" stroke-width="1"/>
<!-- shell -->
<path d="M457.5 88L463 82.5H488V107L482.5 112.5H457.5Z" fill="#dcdcdc" stroke="#555" stroke-width="1"/><path d="M457.5 88H482.5V112.5M482.5 88L488 82.5" fill="none" stroke="#555" stroke-width="1"/><path d="M462 93H478V108H462Z" fill="#3f8fd6"/><path d="M467 93H478V103H467Z" fill="#f2f2f2"/><path d="M462 108L467 103H478V108Z" fill="#7fbcf0"/>
<!-- combine -->
<path d="M500 97L505 92H513V88L518 82.5H531V98L526 103H518V107L513 112.5H500Z" fill="#5ea8e4"/><path d="M513 88L518 82.5H531L526 88Z M500 97L505 92H513V97Z" fill="#8cc6f2"/><path d="M526 88L531 82.5V98L526 103Z M513 103H518V107L513 112.5Z" fill="#3483c8"/>
<!-- split -->
<path d="M545.5 100.5H566L572 96V107L566 112.5H545.5Z" fill="#dcdcdc" stroke="#999" stroke-width="0.8"/><path d="M545.5 87.5L551 82.5H572V92L566 97H545.5Z" fill="#5ea8e4"/><path d="M545.5 87.5L551 82.5H572L566 87.5Z" fill="#8cc6f2"/><path d="M566 87.5L572 82.5V92L566 97Z" fill="#3483c8"/><path d="M541.5 99H568L576 92.5" fill="none" stroke="#1b83e0" stroke-width="1.3"/>
<!-- move -->
<path d="M601 82V112M586 97H616" stroke="#222" stroke-width="2"/><path d="M601 79.5L596.8 86H605.2Z M601 114.5L596.8 108H605.2Z M583.5 97L590 92.8V101.2Z M618.5 97L612 92.8V101.2Z" fill="#222"/>
<!-- new component -->
<path d="M640.5 91L644.5 87.5H655V99H640.5Z" fill="#5ea8e4"/><path d="M651 91L655 87.5V99H651Z" fill="#3483c8"/><path d="M640.5 91L644.5 87.5H655L651 91Z" fill="#8cc6f2"/><path d="M640.5 99.5H652.5V112.5H640.5Z M653.5 103L657.5 99.5H668V109L664 112.5H653.5Z" fill="#e0e0e0" stroke="#888" stroke-width="0.8"/><path d="M653.5 103H664V112.5M664 103L668 99.5" fill="none" stroke="#888" stroke-width="0.8"/><path d="M663 82L664.6 87.2L669.5 84.8L667.1 89.7L672.3 91.3L667.1 92.9L669.5 97.8L664.6 95.4L663 100.6L661.4 95.4L656.5 97.8L658.9 92.9L653.7 91.3L658.9 89.7L656.5 84.8L661.4 87.2Z" fill="#f7941d"/>
<!-- joint -->
<path d="M686 110V92C686 85 690 83.5 694 83.5C697.5 83.5 698.5 86 698.5 89V103L693 106.5V110Z" fill="#d6d6d6" stroke="#555" stroke-width="1"/><path d="M700.5 106.5V92L706 86.5C709.5 88 712.5 93 712.5 98V111Z" fill="#d6d6d6" stroke="#555" stroke-width="1"/><path d="M694 88V102M703.5 88V96" stroke="#1b83e0" stroke-width="1.2"/><ellipse cx="694.5" cy="86" rx="3" ry="1.6" fill="#eee" stroke="#555" stroke-width="0.7"/>
<!-- configuration (disabled) -->
<g opacity="0.45"><path d="M750.5 88L756 82.5H778V108.5H750.5Z" fill="#e8e8e8" stroke="#bbb" stroke-width="1"/><circle cx="773.5" cy="89.5" r="8" fill="#8fbff0"/><path d="M773.5 84.5L770 89.5H772.5V94.5H774.5V89.5H777Z" fill="#fff"/><path d="M768 104H782M768 110H782M772 101.5V106.5M778 107.5V112.5" stroke="#999" stroke-width="1.4" fill="none"/>
<path d="M794 84.5H822V108.5H794Z" fill="#ececec" stroke="#bbb" stroke-width="1"/><path d="M794 90.5H822M794 96.5H822M794 102.5H822M801 84.5V108.5M808 84.5V108.5M815 84.5V108.5" stroke="#bbb" stroke-width="0.8" fill="none"/><circle cx="817.5" cy="89.5" r="8" fill="#8fbff0"/><path d="M817.5 84.5L814 89.5H816.5V94.5H818.5V89.5H821Z" fill="#fff"/><path d="M811 104H825M811 110H825M815 101.5V106.5M821 107.5V112.5" stroke="#999" stroke-width="1.4" fill="none"/></g>
<!-- construct -->
<path d="M864.5 89L870 82.5H873.5V106L868 112.5H864.5Z" fill="#e2e2e2" stroke="#555" stroke-width="1"/><path d="M873.5 86L881.5 82.5V104L873.5 111Z" fill="#4bb86a"/><path d="M885.5 91L893.5 84V106.5L885.5 112.5Z" fill="#ef9a62"/>
<!-- inspect -->
<path d="M925.5 94.5H950.5M925.5 91.5V97.5M950.5 91.5V97.5" stroke="#444" stroke-width="1" fill="none"/><path d="M925.8 94.5L929.5 92.8V96.2Z M950.2 94.5L946.5 92.8V96.2Z" fill="#444"/><rect x="923.5" y="100.5" width="28.5" height="5.5" fill="#f5a623"/><path d="M926.5 100.5V103M929.5 100.5V102M932.5 100.5V103M935.5 100.5V102M938.5 100.5V103M941.5 100.5V102M944.5 100.5V103M947.5 100.5V102M950 100.5V103" stroke="#7a4a00" stroke-width="0.7"/>
<!-- insert derive -->
<path d="M983.5 93.5L988 89.5H1008V107.5L1003.5 111.5H983.5Z" fill="#e4e4e4" stroke="#555" stroke-width="1"/><path d="M983.5 93.5H1003.5V111.5M1003.5 93.5L1008 89.5" fill="none" stroke="#555" stroke-width="1"/><path d="M979 86.5H988V83L995.5 88L988 93V89.5H979Z" fill="#1b7fd6"/><g fill="none" stroke="#222" stroke-width="2"><rect x="996" y="104.5" width="8.5" height="5.5" rx="2.7" transform="rotate(-35 1000 107)"/><rect x="1002" y="100.5" width="8.5" height="5.5" rx="2.7" transform="rotate(-35 1006 103)"/></g>
<!-- insert image -->
<rect x="1023.2" y="83" width="28.6" height="28.6" fill="#6db4ee"/><circle cx="1044" cy="90.5" r="3" fill="#fdf3c8"/><path d="M1023.2 104C1028 96 1032 96 1036 101C1040 96 1044 99 1047 102C1049 100 1050.5 100 1051.8 101V111.6H1023.2Z" fill="#3f8fd0"/>
<!-- select -->
<rect x="1075" y="79" width="38" height="37.5" fill="#0f96d8"/><ellipse cx="1092" cy="96" rx="13" ry="13.5" fill="none" stroke="#7ee08a" stroke-width="1.1" stroke-dasharray="4 2.5"/><path d="M1098.5 95.5V113.5L1102.5 110L1105 115.8L1107.6 114.6L1105 109H1110Z" fill="#fff"/>
</svg>
<!-- browser header -->
<div class="abs" style="left:12px;top:144px;width:299px;height:24px;background:#f2f2f2;border:1px solid #c6c6c6;box-sizing:border-box"></div>
<svg class="ic" style="left:16px;top:152px" width="12" height="9" viewBox="0 0 12 9"><path d="M0.5 4.5L5.5 1V8Z M6 4.5L11 1V8Z" fill="#333"/></svg>
<svg class="ic" style="left:290px;top:151px" width="11" height="11" viewBox="0 0 11 11"><circle cx="5.5" cy="5.5" r="4.8" fill="#222"/><rect x="2.7" y="4.7" width="5.6" height="1.6" fill="#f2f2f2"/></svg>
<div class="abs" style="left:16.3px;top:174px;width:5.4px;height:932px;background:rgba(120,120,120,0.42);border-radius:2px 2px 0 0"></div>
<div class="abs" style="left:16.3px;top:174px;width:5.4px;height:316px;background:#8e8e8e;border-radius:2px 2px 0 0"></div>
<!-- comment bar -->
<div class="abs" style="left:12px;top:1131px;width:299px;height:24px;background:#f2f2f2;border:1px solid #c6c6c6;box-sizing:border-box"></div>
<svg class="ic" style="left:290px;top:1138px" width="11" height="11" viewBox="0 0 11 11"><circle cx="5.5" cy="5.5" r="4.8" fill="#222"/><rect x="2.7" y="4.7" width="5.6" height="1.6" fill="#f2f2f2"/><rect x="4.7" y="2.7" width="1.6" height="5.6" fill="#f2f2f2"/></svg>
<!-- nav bar -->
<div class="abs" style="left:850px;top:1130px;width:237px;height:24.5px;background:#f0f0f0"></div>
<svg class="ic" style="left:850px;top:1130px" width="237" height="25" viewBox="850 1130 237 25">
<g fill="#333"><path d="M873.5 1140H880.5L877 1144.5Z M984.5 1140H991.5L988 1144.5Z M1014.5 1140H1021.5L1018 1144.5Z M1045.5 1140H1052.5L1049 1144.5Z M1076.5 1140H1083.5L1080 1144.5Z"/></g>
<path d="M861 1134V1151" stroke="#333" stroke-width="2.2"/><path d="M861 1134V1151" stroke="#f0f0f0" stroke-width="0.8"/><path d="M858 1136.5L861 1132.5L864 1136.5Z" fill="#333"/><path d="M855 1146C851 1142.5 858 1139.5 861 1140.5M863.5 1140.5C870 1141.5 869.5 1146 864 1146.5" fill="none" stroke="#333" stroke-width="1.3"/><path d="M856.8 1143.5L853 1146.8L857.5 1148.5Z" fill="#333"/>
<path d="M886.5 1141.5L891 1137.5L893 1139.5L897 1136.5L899 1139L901.5 1137.5V1141.5" fill="#aaa" stroke="#333" stroke-width="1"/><rect x="886.5" y="1141.5" width="15.5" height="9" fill="#e8e8e8" stroke="#333" stroke-width="1.1"/><rect x="889.5" y="1144" width="9.5" height="4" fill="#9aa8bd" stroke="#333" stroke-width="0.8"/>
<path d="M913 1146C911 1142 915 1142 916 1145V1136.5C916 1134.5 918.3 1134.5 918.3 1136.5V1141V1134.5C918.3 1132.5 920.8 1132.5 920.8 1134.5V1141V1135.5C920.8 1133.5 923.2 1133.5 923.2 1135.5V1141.5V1137.5C923.2 1135.8 925.5 1135.8 925.5 1137.5V1146C925.5 1149.5 923.5 1151.5 921 1151.5H918.5C916 1151.5 914.5 1149 913 1146Z" fill="#fff" stroke="#333" stroke-width="1"/>
<circle cx="943" cy="1141.5" r="4.6" fill="#dfeaea" stroke="#333" stroke-width="1.3"/><path d="M946.3 1145L950.5 1149.5" stroke="#333" stroke-width="2.4" stroke-linecap="round"/><path d="M949.5 1136H953.5M951.5 1134V1138M949.5 1140.5H953.5" stroke="#333" stroke-width="1" fill="none"/>
<rect x="964.5" y="1134.5" width="14" height="15" fill="none" stroke="#333" stroke-width="0.9" stroke-dasharray="2 1.6"/><circle cx="970.5" cy="1140.5" r="5.6" fill="#dfeaea" stroke="#333" stroke-width="1.3"/><path d="M974.6 1145L979 1150" stroke="#333" stroke-width="2.6" stroke-linecap="round"/>
<rect x="997.5" y="1135" width="15.5" height="11.5" rx="1" fill="#e8e8e8" stroke="#333" stroke-width="1.2"/><rect x="999.8" y="1137.2" width="11" height="7" fill="#8fa9d6"/><path d="M1003 1147H1007.5V1149H1010.5V1150.5H1000V1149H1003Z" fill="#aaa"/>
<rect x="1028.5" y="1135.5" width="15" height="15" fill="#8a8a94"/><path d="M1032.2 1135.5V1150.5M1036 1135.5V1150.5M1039.8 1135.5V1150.5M1028.5 1139.2H1043.5M1028.5 1143H1043.5M1028.5 1146.8H1043.5" stroke="#f0f0f0" stroke-width="0.9"/><rect x="1028.5" y="1135.5" width="15" height="15" fill="none" stroke="#444" stroke-width="1"/>
<rect x="1059.5" y="1136" width="14.5" height="13.5" rx="1" fill="#3f5fa8"/><rect x="1061" y="1137.5" width="5.2" height="4.6" fill="#a9c0ea"/><rect x="1067.4" y="1137.5" width="5.2" height="4.6" fill="#a9c0ea"/><rect x="1061" y="1143.4" width="5.2" height="4.6" fill="#a9c0ea"/><rect x="1067.4" y="1143.4" width="5.2" height="4.6" fill="#a9c0ea"/>
</svg>
<!-- bottom strip -->
<div class="abs" style="left:0;top:1160px;width:1928px;height:8px;background:#111"></div>
<div class="abs" style="left:57px;top:1160px;width:287px;height:8px;background:#f4f4f4"></div>
<div class="abs" style="left:640px;top:1160px;width:48px;height:8px;background:#2d2d2d"></div>
<div class="abs" style="left:1827px;top:1166.5px;width:11px;height:1.5px;background:#cfcfcf"></div><div class="abs" style="left:1843px;top:1166.5px;width:9px;height:1.5px;background:#cfcfcf"></div><div class="abs" style="left:1923px;top:1160px;width:1px;height:8px;background:#4a4a4a"></div>
<!-- view cube -->
<svg class="ic" style="left:1800px;top:150px" width="128" height="120" viewBox="1800 150 128 120">
<defs><filter id="vb" x="-30%" y="-30%" width="160%" height="160%"><feGaussianBlur stdDeviation="4"/></filter><linearGradient id="vc1" x1="0" y1="0" x2="0" y2="1"><stop offset="0" stop-color="#f1f1f1"/><stop offset="1" stop-color="#dedede"/></linearGradient></defs>
<path d="M1834 222L1856 241L1898 226L1905 236L1860 252L1830 230Z" fill="#555" opacity="0.45" filter="url(#vb)"/>
<path d="M1833.5 179L1854.5 193.5L1853.5 240L1834 221Z" fill="url(#vc1)"/><path d="M1854.5 193.5L1898.5 184.5L1896.5 227L1853.5 240Z" fill="url(#vc1)"/><path d="M1833.5 179L1872 172L1898.5 184.5L1854.5 193.5Z" fill="#f4f4f4"/>
<g fill="none" stroke="#8e8e8e" stroke-width="0.8" stroke-dasharray="4 2"><path d="M1833.5 179L1872 172L1898.5 184.5L1896.5 227L1853.5 240L1834 221Z"/><path d="M1833.5 179L1854.5 193.5L1898.5 184.5M1854.5 193.5L1853.5 240"/></g>
<rect x="1850" y="189" width="12" height="11" fill="#d9dde6" opacity="0.8"/>
<path d="M1831.5 171L1834.5 221" stroke="#5a62f0" stroke-width="2"/><path d="M1834.5 221L1860 248" stroke="#f08c8c" stroke-width="2.2"/>
<text x="1826.5" y="169" font-family="'Liberation Sans',sans-serif" font-size="13" fill="#6f76f5">Z</text><text x="1857" y="256" font-family="'Liberation Sans',sans-serif" font-size="12.5" fill="#f28a8a">X</text>
<text font-family="'Liberation Sans','Noto Sans CJK JP',sans-serif" font-size="23" fill="#8d9096" transform="matrix(1,-0.2,-0.04,1,1864,223)">右</text>
<text font-family="'Liberation Sans','Noto Sans CJK JP',sans-serif" font-size="19" fill="#9a9da3" transform="matrix(0.55,0.42,-0.04,1.05,1837,214)">前</text>
<text font-family="'Liberation Sans','Noto Sans CJK JP',sans-serif" font-size="19" fill="#a4a7ad" transform="matrix(-0.95,0.2,-0.6,-0.32,1874,181)">上</text>
</svg>

<div class="rb" style="left:47.8px;top:174px;width:140.3px"></div><svg class="ic" style="left:28.2px;top:177.7px" width="13" height="13" viewBox="0 0 13 13"><defs><linearGradient id="tg" x1="0" y1="1" x2="1" y2="0"><stop offset="0" stop-color="#aaa"/><stop offset="1" stop-color="#555"/></linearGradient></defs><path d="M11.5 1.5V11.5H1.5Z" fill="url(#tg)" stroke="#333" stroke-width="1.2" stroke-linejoin="round"/></svg><svg class="ic" style="left:51.0px;top:178.5px" width="16" height="11"><use href="#i-eye"/></svg><div style="position:absolute;left:73px;top:176px;width:90px;height:16px;background:#8c8c8c"></div><svg class="ic" style="left:76.0px;top:176.0px" width="16" height="16"><use href="#i-comp"/></svg><svg class="ic" style="left:166.5px;top:177px" width="14" height="14" viewBox="0 0 14 14"><circle cx="7" cy="7" r="6" fill="#fff" stroke="#222" stroke-width="1.2"/><circle cx="7" cy="7" r="2.6" fill="#222"/></svg><div class="rb" style="left:65.9px;top:198px;width:118.0px"></div><svg class="ic" style="left:47.3px;top:201.3px" width="11" height="14" viewBox="0 0 11 14"><path d="M1.2 1.2L9.3 7L1.2 12.8Z" fill="#f4f4f4" stroke="#333" stroke-width="1.3" stroke-linejoin="round"/></svg><svg class="ic" style="left:68.8px;top:201.2px" width="13.5" height="13.5"><use href="#i-gear"/></svg><div class="rb" style="left:65.9px;top:222px;width:126.0px"></div><svg class="ic" style="left:47.3px;top:225.3px" width="11" height="14" viewBox="0 0 11 14"><path d="M1.2 1.2L9.3 7L1.2 12.8Z" fill="#f4f4f4" stroke="#333" stroke-width="1.3" stroke-linejoin="round"/></svg><svg class="ic" style="left:69.0px;top:225.0px" width="16" height="13"><use href="#i-folder"/></svg><div class="rb" style="left:65.9px;top:246px;width:91.0px"></div><svg class="ic" style="left:47.3px;top:249.3px" width="11" height="14" viewBox="0 0 11 14"><path d="M1.2 1.2L9.3 7L1.2 12.8Z" fill="#f4f4f4" stroke="#333" stroke-width="1.3" stroke-linejoin="round"/></svg><svg class="ic" style="left:69.0px;top:250.0px" width="16" height="12"><use href="#i-eyeoff"/></svg><svg class="ic" style="left:94.0px;top:249.0px" width="16" height="13"><use href="#i-folder"/></svg><div class="rb" style="left:65.9px;top:270px;width:95.0px"></div><svg class="ic" style="left:46.0px;top:273.7px" width="13" height="13" viewBox="0 0 13 13"><defs><linearGradient id="tg" x1="0" y1="1" x2="1" y2="0"><stop offset="0" stop-color="#aaa"/><stop offset="1" stop-color="#555"/></linearGradient></defs><path d="M11.5 1.5V11.5H1.5Z" fill="url(#tg)" stroke="#333" stroke-width="1.2" stroke-linejoin="round"/></svg><svg class="ic" style="left:69.0px;top:274.5px" width="16" height="11"><use href="#i-eye"/></svg><svg class="ic" style="left:94.0px;top:273.0px" width="16" height="13"><use href="#i-folder"/></svg><div class="rb" style="left:84.0px;top:294px;width:118.9px"></div><svg class="ic" style="left:87.3px;top:298.5px" width="16" height="11"><use href="#i-eye"/></svg><svg class="ic" style="left:112.0px;top:296.0px" width="16" height="16"><use href="#i-body"/></svg><div class="rb" style="left:84.0px;top:318px;width:118.9px"></div><svg class="ic" style="left:87.3px;top:322.5px" width="16" height="11"><use href="#i-eye"/></svg><svg class="ic" style="left:112.0px;top:320.0px" width="16" height="16"><use href="#i-body"/></svg><div class="rb" style="left:84.0px;top:342px;width:121.9px"></div><svg class="ic" style="left:87.3px;top:346.5px" width="16" height="11"><use href="#i-eye"/></svg><svg class="ic" style="left:112.0px;top:344.0px" width="16" height="16"><use href="#i-body"/></svg><div class="rb" style="left:84.0px;top:366px;width:92.8px"></div><svg class="ic" style="left:87.3px;top:370.5px" width="16" height="11"><use href="#i-eye"/></svg><svg class="ic" style="left:112.0px;top:368.0px" width="16" height="16"><use href="#i-body"/></svg><div class="rb" style="left:84.0px;top:390px;width:92.8px"></div><svg class="ic" style="left:87.3px;top:394.5px" width="16" height="11"><use href="#i-eye"/></svg><svg class="ic" style="left:112.0px;top:392.0px" width="16" height="16"><use href="#i-body"/></svg><div class="rb" style="left:84.0px;top:414px;width:141.3px"></div><svg class="ic" style="left:87.3px;top:418.5px" width="16" height="11"><use href="#i-eye"/></svg><svg class="ic" style="left:112.0px;top:416.0px" width="16" height="16"><use href="#i-body"/></svg><div class="rb" style="left:84.0px;top:438px;width:141.3px"></div><svg class="ic" style="left:87.3px;top:442.5px" width="16" height="11"><use href="#i-eye"/></svg><svg class="ic" style="left:112.0px;top:440.0px" width="16" height="16"><use href="#i-body"/></svg><div class="rb" style="left:84.0px;top:462px;width:146.6px"></div><svg class="ic" style="left:87.3px;top:466.5px" width="16" height="11"><use href="#i-eye"/></svg><svg class="ic" style="left:112.0px;top:464.0px" width="16" height="16"><use href="#i-body"/></svg><div class="rb" style="left:84.0px;top:486px;width:136.7px"></div><svg class="ic" style="left:87.3px;top:490.5px" width="16" height="11"><use href="#i-eye"/></svg><svg class="ic" style="left:112.0px;top:488.0px" width="16" height="16"><use href="#i-body"/></svg><div class="rb" style="left:84.0px;top:510px;width:84.9px"></div><svg class="ic" style="left:87.3px;top:514.5px" width="16" height="11"><use href="#i-eye"/></svg><svg class="ic" style="left:112.0px;top:512.0px" width="16" height="16"><use href="#i-body"/></svg><div class="rb" style="left:65.9px;top:534px;width:107.9px"></div><svg class="ic" style="left:47.3px;top:537.3px" width="11" height="14" viewBox="0 0 11 14"><path d="M1.2 1.2L9.3 7L1.2 12.8Z" fill="#f4f4f4" stroke="#333" stroke-width="1.3" stroke-linejoin="round"/></svg><svg class="ic" style="left:69.0px;top:538.5px" width="16" height="11"><use href="#i-eye"/></svg><svg class="ic" style="left:94.0px;top:537.0px" width="16" height="13"><use href="#i-folder"/></svg><div class="rb" style="left:65.9px;top:558px;width:98.0px"></div><svg class="ic" style="left:47.3px;top:561.3px" width="11" height="14" viewBox="0 0 11 14"><path d="M1.2 1.2L9.3 7L1.2 12.8Z" fill="#f4f4f4" stroke="#333" stroke-width="1.3" stroke-linejoin="round"/></svg><svg class="ic" style="left:69.0px;top:562.5px" width="16" height="11"><use href="#i-eye"/></svg><svg class="ic" style="left:94.0px;top:561.0px" width="16" height="13"><use href="#i-folder"/></svg><div class="rb" style="left:65.9px;top:582px;width:138.3px"></div><svg class="ic" style="left:47.3px;top:585.3px" width="11" height="14" viewBox="0 0 11 14"><path d="M1.2 1.2L9.3 7L1.2 12.8Z" fill="#f4f4f4" stroke="#333" stroke-width="1.3" stroke-linejoin="round"/></svg><svg class="ic" style="left:69.0px;top:586.5px" width="16" height="11"><use href="#i-eye"/></svg><svg class="ic" style="left:94.0px;top:585.0px" width="16" height="13"><use href="#i-folder"/></svg><div class="rb" style="left:66.3px;top:606px;width:104.6px"></div><svg class="ic" style="left:67.5px;top:608.0px" width="18" height="16"><use href="#i-ext"/></svg><div class="rb" style="left:66.3px;top:630px;width:104.6px"></div><svg class="ic" style="left:67.5px;top:632.0px" width="18" height="16"><use href="#i-ext"/></svg><div class="rb" style="left:66.3px;top:654px;width:104.6px"></div><svg class="ic" style="left:67.5px;top:656.0px" width="18" height="16"><use href="#i-fil"/></svg><div class="rb" style="left:66.3px;top:678px;width:104.6px"></div><svg class="ic" style="left:67.5px;top:680.0px" width="18" height="16"><use href="#i-ext"/></svg><div class="rb" style="left:66.3px;top:702px;width:104.6px"></div><svg class="ic" style="left:67.5px;top:704.0px" width="18" height="16"><use href="#i-ext"/></svg><div class="rb" style="left:66.3px;top:726px;width:104.6px"></div><svg class="ic" style="left:67.5px;top:728.0px" width="18" height="16"><use href="#i-fil"/></svg><div class="rb" style="left:66.3px;top:750px;width:104.6px"></div><svg class="ic" style="left:67.5px;top:752.0px" width="18" height="16"><use href="#i-ext"/></svg><div class="rb" style="left:66.3px;top:774px;width:104.6px"></div><svg class="ic" style="left:67.5px;top:776.0px" width="18" height="16"><use href="#i-ext"/></svg><div class="rb" style="left:66.3px;top:798px;width:104.6px"></div><svg class="ic" style="left:67.5px;top:800.0px" width="18" height="16"><use href="#i-ext"/></svg><div class="rb" style="left:66.3px;top:822px;width:104.6px"></div><svg class="ic" style="left:67.5px;top:824.0px" width="18" height="16"><use href="#i-ext"/></svg><div class="rb" style="left:66.3px;top:846px;width:104.6px"></div><svg class="ic" style="left:67.5px;top:848.0px" width="18" height="16"><use href="#i-fil"/></svg><div class="rb" style="left:66.3px;top:870px;width:104.6px"></div><svg class="ic" style="left:67.5px;top:872.0px" width="18" height="16"><use href="#i-ext"/></svg><div class="rb" style="left:66.3px;top:894px;width:104.6px"></div><svg class="ic" style="left:67.5px;top:896.0px" width="18" height="16"><use href="#i-ext"/></svg><div class="rb" style="left:66.3px;top:918px;width:104.6px"></div><svg class="ic" style="left:67.5px;top:920.0px" width="18" height="16"><use href="#i-fil"/></svg><div class="rb" style="left:66.3px;top:942px;width:104.6px"></div><svg class="ic" style="left:67.5px;top:944.0px" width="18" height="16"><use href="#i-ext"/></svg><div class="rb" style="left:66.3px;top:966px;width:88.5px"></div><svg class="ic" style="left:67.5px;top:968.0px" width="18" height="16"><use href="#i-dra"/></svg><div class="rb" style="left:66.3px;top:990px;width:104.6px"></div><svg class="ic" style="left:67.5px;top:992.0px" width="18" height="16"><use href="#i-ext"/></svg><div class="rb" style="left:66.3px;top:1014px;width:88.5px"></div><svg class="ic" style="left:67.5px;top:1016.0px" width="18" height="16"><use href="#i-dra"/></svg><div class="rb" style="left:66.3px;top:1038px;width:104.6px"></div><svg class="ic" style="left:67.5px;top:1040.0px" width="18" height="16"><use href="#i-ext"/></svg><div class="rb" style="left:66.3px;top:1062px;width:104.6px"></div><svg class="ic" style="left:67.5px;top:1064.0px" width="18" height="16"><use href="#i-ext"/></svg><div class="rb" style="left:66.3px;top:1086px;width:104.6px"></div><svg class="ic" style="left:67.5px;top:1088.0px" width="18" height="16"><use href="#i-ext"/></svg>
<span class="t" style="left:31.0px;top:1.8px;font-size:12px;color:#000;font-weight:normal;transform:scaleX(0.9821)">N5915 v5 (g catsin) - Autodesk Fusion 個人用(商用利用不可)</span><span class="t" style="left:328.2px;top:34.6px;font-size:12.5px;color:#555;font-weight:normal;transform:scaleX(0.9806)">PC-9801U2_open2 v3</span><span class="t" style="left:745.0px;top:32.1px;font-size:12.5px;color:#555;font-weight:normal;transform:scaleX(0.9707)">無題*</span><span class="t" style="left:1069.0px;top:34.6px;font-size:12.5px;color:#555;font-weight:normal;transform:scaleX(0.9866)">PC-9801U2_open v2*</span><span class="t" style="left:1473.4px;top:34.6px;font-size:12.5px;color:#333;font-weight:normal;transform:scaleX(0.9586)">N5915 v5</span><span class="t" style="left:157.5px;top:58.3px;font-size:11px;color:#1187d8;font-weight:normal;transform:scaleX(0.7386)">ソリッド</span><span class="t" style="left:236.0px;top:58.3px;font-size:11px;color:#3a3a3a;font-weight:normal;transform:scaleX(0.7177)">サーフェス</span><span class="t" style="left:319.0px;top:58.3px;font-size:11px;color:#3a3a3a;font-weight:normal;transform:scaleX(0.7045)">メッシュ</span><span class="t" style="left:396.5px;top:58.3px;font-size:11px;color:#3a3a3a;font-weight:normal;transform:scaleX(0.7327)">フォーム</span><span class="t" style="left:475.0px;top:58.3px;font-size:11px;color:#3a3a3a;font-weight:normal;transform:scaleX(0.7457)">シート メタル</span><span class="t" style="left:572.5px;top:58.3px;font-size:11px;color:#3a3a3a;font-weight:normal;transform:scaleX(0.7221)">プラスチック</span><span class="t" style="left:666.0px;top:58.3px;font-size:11px;color:#3a3a3a;font-weight:normal;transform:scaleX(0.7135)">ユーティリティ</span><span class="t" style="left:52.5px;top:86.8px;font-size:11px;color:#222;font-weight:normal;transform:scaleX(0.7955)">デザイン</span><span class="t" style="left:229.0px;top:117.3px;font-size:11px;color:#333;font-weight:normal;transform:scaleX(1.0000)">作成</span><span class="t" style="left:476.0px;top:117.3px;font-size:11px;color:#333;font-weight:normal;transform:scaleX(1.0000)">修正</span><span class="t" style="left:650.0px;top:117.3px;font-size:11px;color:#333;font-weight:normal;transform:scaleX(0.7805)">アセンブリ</span><span class="t" style="left:739.0px;top:117.3px;font-size:11px;color:#333;font-weight:normal;transform:scaleX(0.7166)">コンフィギュレーション</span><span class="t" style="left:864.0px;top:117.3px;font-size:11px;color:#333;font-weight:normal;transform:scaleX(1.0227)">構築</span><span class="t" style="left:922.5px;top:117.3px;font-size:11px;color:#333;font-weight:normal;transform:scaleX(0.9773)">検査</span><span class="t" style="left:998.0px;top:117.3px;font-size:11px;color:#333;font-weight:normal;transform:scaleX(0.9545)">挿入</span><span class="t" style="left:1078.0px;top:117.3px;font-size:11px;color:#333;font-weight:normal;transform:scaleX(1.0000)">選択</span><span class="t" style="left:37.0px;top:147.8px;font-size:11px;color:#666;font-weight:normal;transform:scaleX(0.7432)">ブラウザ</span><span class="t" style="left:37.0px;top:1134.8px;font-size:11px;color:#666;font-weight:normal;transform:scaleX(0.7432)">コメント</span><span class="t" style="left:106.3px;top:177.8px;font-size:11px;color:#fff;font-weight:bold;transform:scaleX(0.9577)">N5915 v5</span><span class="t" style="left:95.1px;top:199.8px;font-size:11px;color:#2a2a2a;font-weight:500;transform:scaleX(0.7798)">ドキュメントの設定</span><span class="t" style="left:99.8px;top:223.8px;font-size:11px;color:#2a2a2a;font-weight:500;transform:scaleX(0.8212)">名前の付いたビュー</span><span class="t" style="left:123.7px;top:247.8px;font-size:11px;color:#2a2a2a;font-weight:500;transform:scaleX(0.9864)">原点</span><span class="t" style="left:123.7px;top:271.8px;font-size:11px;color:#2a2a2a;font-weight:500;transform:scaleX(0.7756)">ボディ</span><span class="t" style="left:142.1px;top:295.8px;font-size:11px;color:#2a2a2a;font-weight:500;transform:scaleX(0.8063)">ボディ・上面</span><span class="t" style="left:142.1px;top:319.8px;font-size:11px;color:#2a2a2a;font-weight:500;transform:scaleX(0.8063)">ボディ・底面</span><span class="t" style="left:142.1px;top:343.8px;font-size:11px;color:#2a2a2a;font-weight:500;transform:scaleX(0.9887)">電源SW (1)</span><span class="t" style="left:142.1px;top:367.8px;font-size:11px;color:#2a2a2a;font-weight:500;transform:scaleX(0.8030)">軸・左</span><span class="t" style="left:142.1px;top:391.8px;font-size:11px;color:#2a2a2a;font-weight:500;transform:scaleX(0.8030)">軸・右</span><span class="t" style="left:142.1px;top:415.8px;font-size:11px;color:#2a2a2a;font-weight:500;transform:scaleX(0.7635)">ディスプレイ・裏面</span><span class="t" style="left:142.1px;top:439.8px;font-size:11px;color:#2a2a2a;font-weight:500;transform:scaleX(0.7635)">ディスプレイ・表麺</span><span class="t" style="left:142.1px;top:463.8px;font-size:11px;color:#2a2a2a;font-weight:500;transform:scaleX(0.7351)">ディスプレイ・パネル</span><span class="t" style="left:142.1px;top:487.8px;font-size:11px;color:#2a2a2a;font-weight:500;transform:scaleX(0.7127)">コントラストツマミ</span><span class="t" style="left:142.1px;top:513.8px;font-size:11px;color:#2a2a2a;font-weight:500;transform:scaleX(0.8689)">LED</span><span class="t" style="left:124.6px;top:535.8px;font-size:11px;color:#2a2a2a;font-weight:500;transform:scaleX(0.7400)">キャンバス</span><span class="t" style="left:124.6px;top:559.8px;font-size:11px;color:#2a2a2a;font-weight:500;transform:scaleX(0.7000)">スケッチ</span><span class="t" style="left:124.6px;top:583.8px;font-size:11px;color:#2a2a2a;font-weight:500;transform:scaleX(0.7198)">コンストラクション</span><span class="t" style="left:99.6px;top:607.8px;font-size:11px;color:#2a2a2a;font-weight:500;transform:scaleX(0.8878)">押し出し3001</span><span class="t" style="left:99.6px;top:631.8px;font-size:11px;color:#2a2a2a;font-weight:500;transform:scaleX(0.8878)">押し出し3002</span><span class="t" style="left:99.6px;top:655.8px;font-size:11px;color:#2a2a2a;font-weight:500;transform:scaleX(0.7670)">フィレット3004</span><span class="t" style="left:99.6px;top:679.8px;font-size:11px;color:#2a2a2a;font-weight:500;transform:scaleX(0.8878)">押し出し3005</span><span class="t" style="left:99.6px;top:703.8px;font-size:11px;color:#2a2a2a;font-weight:500;transform:scaleX(0.8878)">押し出し3021</span><span class="t" style="left:99.6px;top:727.8px;font-size:11px;color:#2a2a2a;font-weight:500;transform:scaleX(0.7670)">フィレット3022</span><span class="t" style="left:99.6px;top:751.8px;font-size:11px;color:#2a2a2a;font-weight:500;transform:scaleX(0.8878)">押し出し3023</span><span class="t" style="left:99.6px;top:775.8px;font-size:11px;color:#2a2a2a;font-weight:500;transform:scaleX(0.8878)">押し出し3027</span><span class="t" style="left:99.6px;top:799.8px;font-size:11px;color:#2a2a2a;font-weight:500;transform:scaleX(0.8878)">押し出し3028</span><span class="t" style="left:99.6px;top:823.8px;font-size:11px;color:#2a2a2a;font-weight:500;transform:scaleX(0.8878)">押し出し3029</span><span class="t" style="left:99.6px;top:847.8px;font-size:11px;color:#2a2a2a;font-weight:500;transform:scaleX(0.7670)">フィレット3030</span><span class="t" style="left:99.6px;top:871.8px;font-size:11px;color:#2a2a2a;font-weight:500;transform:scaleX(0.8878)">押し出し3031</span><span class="t" style="left:99.6px;top:895.8px;font-size:11px;color:#2a2a2a;font-weight:500;transform:scaleX(0.8878)">押し出し3032</span><span class="t" style="left:99.6px;top:919.8px;font-size:11px;color:#2a2a2a;font-weight:500;transform:scaleX(0.7670)">フィレット3033</span><span class="t" style="left:99.6px;top:943.8px;font-size:11px;color:#2a2a2a;font-weight:500;transform:scaleX(0.8878)">押し出し3034</span><span class="t" style="left:99.6px;top:967.8px;font-size:11px;color:#2a2a2a;font-weight:500;transform:scaleX(0.9616)">勾配3036</span><span class="t" style="left:99.6px;top:991.8px;font-size:11px;color:#2a2a2a;font-weight:500;transform:scaleX(0.8878)">押し出し3037</span><span class="t" style="left:99.6px;top:1015.8px;font-size:11px;color:#2a2a2a;font-weight:500;transform:scaleX(0.9616)">勾配3038</span><span class="t" style="left:99.6px;top:1039.8px;font-size:11px;color:#2a2a2a;font-weight:500;transform:scaleX(0.8878)">押し出し3039</span><span class="t" style="left:99.6px;top:1063.8px;font-size:11px;color:#2a2a2a;font-weight:500;transform:scaleX(0.8878)">押し出し3040</span><span class="t" style="left:99.6px;top:1087.8px;font-size:11px;color:#2a2a2a;font-weight:500;transform:scaleX(0.8878)">押し出し3045</span>
</div></body></html>
